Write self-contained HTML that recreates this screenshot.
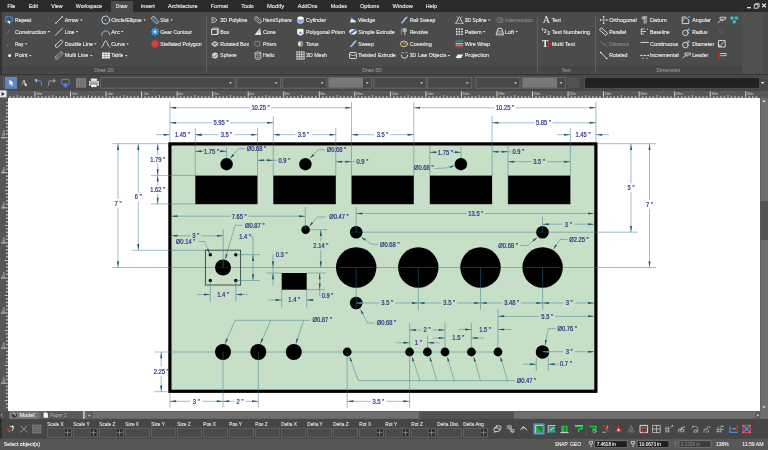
<!DOCTYPE html>
<html><head><meta charset="utf-8"><title>CAD</title>
<style>
html,body{margin:0;padding:0;background:#4a4a4a;overflow:hidden}
body{width:768px;height:450px;position:relative;font-family:"Liberation Sans",sans-serif}
#menubar{position:absolute;left:0;top:0;width:768px;height:12.2px;background:#2b2b2b}
#tab{position:absolute;left:111.3px;top:0.8px;width:22px;height:12px;background:#4b4b4b}
#ribbon{position:absolute;left:0;top:12.2px;width:768px;height:62.3px;background:#4b4b4b}
#ribbon .lbl{position:absolute;left:1.6px;top:53.6px;width:740px;height:7px;background:#454545}
#ribbon .edge{position:absolute;left:0;top:0;width:1.6px;height:62.3px;background:#333}
#ribbon .sep{position:absolute;top:3.5px;width:0.9px;height:57px;background:#606060}
#ribbon .right{position:absolute;left:741.6px;top:0;width:26.4px;height:62.3px;background:#505050}
#ribbon .right2{position:absolute;left:762.6px;top:0;width:5.4px;height:62.3px;background:#4a4a4a}
#rb-bottom{position:absolute;left:0;top:73.6px;width:768px;height:1.2px;background:#343434}
#toolbar{position:absolute;left:0;top:74.8px;width:768px;height:15.5px;background:#494949}
#canvas{position:absolute;left:7.8px;top:98px;width:752.2px;height:313.3px;background:#fff}
svg{filter:blur(0.35px);position:absolute;left:0;top:0;overflow:visible}
text{font-family:"Liberation Sans",sans-serif}
text.serif{font-family:"Liberation Serif",serif}
</style></head>
<body>
<div id="menubar"></div><div id="tab"></div>
<div id="ribbon"><div class="edge"></div><div class="lbl"></div>
<div class="sep" style="left:205.8px"></div><div class="sep" style="left:537.2px"></div><div class="sep" style="left:594.6px"></div>
<div class="right"></div><div class="right2"></div></div>
<div id="rb-bottom"></div>
<div id="toolbar"></div>
<div id="canvas"></div>
<svg id="ui" width="768" height="450" viewBox="0 0 768 450">
<g id="ribbon-text">
<text x="7.5" y="8.3" font-size="5.8" fill="#e6e6e6" textLength="7.8" lengthAdjust="spacingAndGlyphs" stroke="#e6e6e6" stroke-width="0.16">File</text>
<text x="28.7" y="8.3" font-size="5.8" fill="#e6e6e6" textLength="9.3" lengthAdjust="spacingAndGlyphs" stroke="#e6e6e6" stroke-width="0.16">Edit</text>
<text x="51.3" y="8.3" font-size="5.8" fill="#e6e6e6" textLength="11.2" lengthAdjust="spacingAndGlyphs" stroke="#e6e6e6" stroke-width="0.16">View</text>
<text x="75.8" y="8.3" font-size="5.8" fill="#e6e6e6" textLength="26.2" lengthAdjust="spacingAndGlyphs" stroke="#e6e6e6" stroke-width="0.16">Workspace</text>
<text x="115.8" y="8.3" font-size="5.8" fill="#e6e6e6" textLength="11.7" lengthAdjust="spacingAndGlyphs" stroke="#e6e6e6" stroke-width="0.16">Draw</text>
<text x="140.8" y="8.3" font-size="5.8" fill="#e6e6e6" textLength="13.9" lengthAdjust="spacingAndGlyphs" stroke="#e6e6e6" stroke-width="0.16">Insert</text>
<text x="168.0" y="8.3" font-size="5.8" fill="#e6e6e6" textLength="29.5" lengthAdjust="spacingAndGlyphs" stroke="#e6e6e6" stroke-width="0.16">Architecture</text>
<text x="210.8" y="8.3" font-size="5.8" fill="#e6e6e6" textLength="17.2" lengthAdjust="spacingAndGlyphs" stroke="#e6e6e6" stroke-width="0.16">Format</text>
<text x="241.3" y="8.3" font-size="5.8" fill="#e6e6e6" textLength="12.4" lengthAdjust="spacingAndGlyphs" stroke="#e6e6e6" stroke-width="0.16">Tools</text>
<text x="267.0" y="8.3" font-size="5.8" fill="#e6e6e6" textLength="17.2" lengthAdjust="spacingAndGlyphs" stroke="#e6e6e6" stroke-width="0.16">Modify</text>
<text x="297.8" y="8.3" font-size="5.8" fill="#e6e6e6" textLength="19.7" lengthAdjust="spacingAndGlyphs" stroke="#e6e6e6" stroke-width="0.16">AddOns</text>
<text x="330.8" y="8.3" font-size="5.8" fill="#e6e6e6" textLength="16.2" lengthAdjust="spacingAndGlyphs" stroke="#e6e6e6" stroke-width="0.16">Modes</text>
<text x="360.0" y="8.3" font-size="5.8" fill="#e6e6e6" textLength="19.2" lengthAdjust="spacingAndGlyphs" stroke="#e6e6e6" stroke-width="0.16">Options</text>
<text x="392.5" y="8.3" font-size="5.8" fill="#e6e6e6" textLength="20.3" lengthAdjust="spacingAndGlyphs" stroke="#e6e6e6" stroke-width="0.16">Window</text>
<text x="425.8" y="8.3" font-size="5.8" fill="#e6e6e6" textLength="11.2" lengthAdjust="spacingAndGlyphs" stroke="#e6e6e6" stroke-width="0.16">Help</text>
<rect x="747" y="7" width="4" height="1.3" fill="#ddd"/>
<rect x="754.3" y="4.6" width="3.6" height="3.6" fill="none" stroke="#ddd" stroke-width="0.9"/><path d="M755.6 4.4V3.4H759.2V7H758.2" fill="none" stroke="#ddd" stroke-width="0.8"/>
<path d="M762.2 3.6l3.8 3.8M766 3.6l-3.8 3.8" stroke="#eee" stroke-width="1.2"/>
<text x="15.0" y="21.9" font-size="5.7" fill="#e6e6e6" textLength="16.3" lengthAdjust="spacingAndGlyphs" stroke="#e6e6e6" stroke-width="0.16">Repeat</text>
<text x="15.0" y="33.6" font-size="5.7" fill="#e6e6e6" textLength="31.3" lengthAdjust="spacingAndGlyphs" stroke="#e6e6e6" stroke-width="0.16">Construction</text>
<path d="M47.5 31.1h2.6l-1.3 1.5z" fill="#e6e6e6"/>
<text x="15.0" y="45.7" font-size="5.7" fill="#e6e6e6" textLength="8.3" lengthAdjust="spacingAndGlyphs" stroke="#e6e6e6" stroke-width="0.16">Ray</text>
<path d="M24.7 43.2h2.6l-1.3 1.5z" fill="#e6e6e6"/>
<text x="15.0" y="57.4" font-size="5.7" fill="#e6e6e6" textLength="12.5" lengthAdjust="spacingAndGlyphs" stroke="#e6e6e6" stroke-width="0.16">Point</text>
<path d="M29.0 54.9h2.6l-1.3 1.5z" fill="#e6e6e6"/>
<text x="64.7" y="21.9" font-size="5.7" fill="#e6e6e6" textLength="13.6" lengthAdjust="spacingAndGlyphs" stroke="#e6e6e6" stroke-width="0.16">Arrow</text>
<path d="M80.0 19.4h2.6l-1.3 1.5z" fill="#e6e6e6"/>
<text x="64.7" y="33.6" font-size="5.7" fill="#e6e6e6" textLength="9.8" lengthAdjust="spacingAndGlyphs" stroke="#e6e6e6" stroke-width="0.16">Line</text>
<path d="M75.7 31.1h2.6l-1.3 1.5z" fill="#e6e6e6"/>
<text x="64.7" y="45.7" font-size="5.7" fill="#e6e6e6" textLength="28.3" lengthAdjust="spacingAndGlyphs" stroke="#e6e6e6" stroke-width="0.16">Double Line</text>
<path d="M94.0 43.2h2.6l-1.3 1.5z" fill="#e6e6e6"/>
<text x="64.7" y="57.4" font-size="5.7" fill="#e6e6e6" textLength="23.6" lengthAdjust="spacingAndGlyphs" stroke="#e6e6e6" stroke-width="0.16">Multi Line</text>
<path d="M90.0 54.9h2.6l-1.3 1.5z" fill="#e6e6e6"/>
<text x="111.3" y="21.9" font-size="5.7" fill="#e6e6e6" textLength="30.4" lengthAdjust="spacingAndGlyphs" stroke="#e6e6e6" stroke-width="0.16">Circle/Ellipse</text>
<path d="M143.4 19.4h2.6l-1.3 1.5z" fill="#e6e6e6"/>
<text x="111.3" y="33.6" font-size="5.7" fill="#e6e6e6" textLength="8.4" lengthAdjust="spacingAndGlyphs" stroke="#e6e6e6" stroke-width="0.16">Arc</text>
<path d="M120.9 31.1h2.6l-1.3 1.5z" fill="#e6e6e6"/>
<text x="111.3" y="45.7" font-size="5.7" fill="#e6e6e6" textLength="13.7" lengthAdjust="spacingAndGlyphs" stroke="#e6e6e6" stroke-width="0.16">Curve</text>
<path d="M126.3 43.2h2.6l-1.3 1.5z" fill="#e6e6e6"/>
<text x="111.3" y="57.4" font-size="5.7" fill="#e6e6e6" textLength="12.0" lengthAdjust="spacingAndGlyphs" stroke="#e6e6e6" stroke-width="0.16">Table</text>
<path d="M125.0 54.9h2.6l-1.3 1.5z" fill="#e6e6e6"/>
<text x="160.3" y="21.9" font-size="5.7" fill="#e6e6e6" textLength="8.4" lengthAdjust="spacingAndGlyphs" stroke="#e6e6e6" stroke-width="0.16">Slot</text>
<path d="M170.4 19.4h2.6l-1.3 1.5z" fill="#e6e6e6"/>
<text x="160.3" y="33.6" font-size="5.7" fill="#e6e6e6" textLength="31.7" lengthAdjust="spacingAndGlyphs" stroke="#e6e6e6" stroke-width="0.16">Gear Contour</text>
<text x="160.3" y="45.7" font-size="5.7" fill="#e6e6e6" textLength="41.4" lengthAdjust="spacingAndGlyphs" stroke="#e6e6e6" stroke-width="0.16">Stellated Polygon</text>
<text x="220.3" y="21.9" font-size="5.7" fill="#e6e6e6" textLength="27.2" lengthAdjust="spacingAndGlyphs" stroke="#e6e6e6" stroke-width="0.16">3D Polyline</text>
<text x="220.3" y="33.6" font-size="5.7" fill="#e6e6e6" textLength="9.0" lengthAdjust="spacingAndGlyphs" stroke="#e6e6e6" stroke-width="0.16">Box</text>
<text x="220.3" y="45.7" font-size="5.7" fill="#e6e6e6" textLength="28.7" lengthAdjust="spacingAndGlyphs" stroke="#e6e6e6" stroke-width="0.16">Rotated Box</text>
<text x="220.3" y="57.4" font-size="5.7" fill="#e6e6e6" textLength="16.4" lengthAdjust="spacingAndGlyphs" stroke="#e6e6e6" stroke-width="0.16">Sphere</text>
<text x="263.0" y="21.9" font-size="5.7" fill="#e6e6e6" textLength="29.0" lengthAdjust="spacingAndGlyphs" stroke="#e6e6e6" stroke-width="0.16">HemiSphere</text>
<text x="263.0" y="33.6" font-size="5.7" fill="#e6e6e6" textLength="12.8" lengthAdjust="spacingAndGlyphs" stroke="#e6e6e6" stroke-width="0.16">Cone</text>
<text x="263.0" y="45.7" font-size="5.7" fill="#e6e6e6" textLength="13.5" lengthAdjust="spacingAndGlyphs" stroke="#e6e6e6" stroke-width="0.16">Prism</text>
<text x="263.0" y="57.4" font-size="5.7" fill="#e6e6e6" textLength="11.5" lengthAdjust="spacingAndGlyphs" stroke="#e6e6e6" stroke-width="0.16">Helix</text>
<text x="306.0" y="21.9" font-size="5.7" fill="#e6e6e6" textLength="20.0" lengthAdjust="spacingAndGlyphs" stroke="#e6e6e6" stroke-width="0.16">Cylinder</text>
<text x="306.0" y="33.6" font-size="5.7" fill="#e6e6e6" textLength="39.0" lengthAdjust="spacingAndGlyphs" stroke="#e6e6e6" stroke-width="0.16">Polygonal Prism</text>
<text x="306.0" y="45.7" font-size="5.7" fill="#e6e6e6" textLength="12.7" lengthAdjust="spacingAndGlyphs" stroke="#e6e6e6" stroke-width="0.16">Torus</text>
<text x="306.0" y="57.4" font-size="5.7" fill="#e6e6e6" textLength="21.0" lengthAdjust="spacingAndGlyphs" stroke="#e6e6e6" stroke-width="0.16">3D Mesh</text>
<text x="358.3" y="21.9" font-size="5.7" fill="#e6e6e6" textLength="17.0" lengthAdjust="spacingAndGlyphs" stroke="#e6e6e6" stroke-width="0.16">Wedge</text>
<text x="358.3" y="33.6" font-size="5.7" fill="#e6e6e6" textLength="36.4" lengthAdjust="spacingAndGlyphs" stroke="#e6e6e6" stroke-width="0.16">Simple Extrude</text>
<text x="358.3" y="45.7" font-size="5.7" fill="#e6e6e6" textLength="15.4" lengthAdjust="spacingAndGlyphs" stroke="#e6e6e6" stroke-width="0.16">Sweep</text>
<text x="358.3" y="57.4" font-size="5.7" fill="#e6e6e6" textLength="37.5" lengthAdjust="spacingAndGlyphs" stroke="#e6e6e6" stroke-width="0.16">Twisted Extrude</text>
<text x="409.7" y="21.9" font-size="5.7" fill="#e6e6e6" textLength="25.6" lengthAdjust="spacingAndGlyphs" stroke="#e6e6e6" stroke-width="0.16">Rail Sweep</text>
<text x="409.7" y="33.6" font-size="5.7" fill="#e6e6e6" textLength="18.3" lengthAdjust="spacingAndGlyphs" stroke="#e6e6e6" stroke-width="0.16">Revolve</text>
<text x="409.7" y="45.7" font-size="5.7" fill="#e6e6e6" textLength="22.0" lengthAdjust="spacingAndGlyphs" stroke="#e6e6e6" stroke-width="0.16">Covering</text>
<text x="409.7" y="57.4" font-size="5.7" fill="#e6e6e6" textLength="36.6" lengthAdjust="spacingAndGlyphs" stroke="#e6e6e6" stroke-width="0.16">3D Law Objects</text>
<path d="M447.5 54.9h2.6l-1.3 1.5z" fill="#e6e6e6"/>
<text x="464.7" y="21.9" font-size="5.7" fill="#e6e6e6" textLength="22.0" lengthAdjust="spacingAndGlyphs" stroke="#e6e6e6" stroke-width="0.16">3D Spline</text>
<path d="M487.9 19.4h2.6l-1.3 1.5z" fill="#e6e6e6"/>
<text x="464.7" y="33.6" font-size="5.7" fill="#e6e6e6" textLength="17.0" lengthAdjust="spacingAndGlyphs" stroke="#e6e6e6" stroke-width="0.16">Pattern</text>
<path d="M482.9 31.1h2.6l-1.3 1.5z" fill="#e6e6e6"/>
<text x="464.7" y="45.7" font-size="5.7" fill="#e6e6e6" textLength="25.3" lengthAdjust="spacingAndGlyphs" stroke="#e6e6e6" stroke-width="0.16">Wire Wrap</text>
<text x="464.7" y="57.4" font-size="5.7" fill="#e6e6e6" textLength="24.3" lengthAdjust="spacingAndGlyphs" stroke="#e6e6e6" stroke-width="0.16">Projection</text>
<text x="505.0" y="21.9" font-size="5.7" fill="#858585" textLength="28.3" lengthAdjust="spacingAndGlyphs" stroke="#858585" stroke-width="0.16">Intersection</text>
<text x="505.0" y="33.6" font-size="5.7" fill="#e6e6e6" textLength="9.0" lengthAdjust="spacingAndGlyphs" stroke="#e6e6e6" stroke-width="0.16">Loft</text>
<path d="M515.4 31.1h2.6l-1.3 1.5z" fill="#e6e6e6"/>
<text x="551.7" y="21.9" font-size="5.7" fill="#e6e6e6" textLength="9.1" lengthAdjust="spacingAndGlyphs" stroke="#e6e6e6" stroke-width="0.16">Text</text>
<text x="551.7" y="33.6" font-size="5.7" fill="#e6e6e6" textLength="38.3" lengthAdjust="spacingAndGlyphs" stroke="#e6e6e6" stroke-width="0.16">Text Numbering</text>
<text x="551.7" y="45.7" font-size="5.7" fill="#e6e6e6" textLength="23.3" lengthAdjust="spacingAndGlyphs" stroke="#e6e6e6" stroke-width="0.16">Multi Text</text>
<text x="609.2" y="21.9" font-size="5.7" fill="#e6e6e6" textLength="27.5" lengthAdjust="spacingAndGlyphs" stroke="#e6e6e6" stroke-width="0.16">Orthogonal</text>
<text x="609.2" y="33.6" font-size="5.7" fill="#e6e6e6" textLength="17.0" lengthAdjust="spacingAndGlyphs" stroke="#e6e6e6" stroke-width="0.16">Parallel</text>
<text x="609.2" y="45.7" font-size="5.7" fill="#858585" textLength="19.8" lengthAdjust="spacingAndGlyphs" stroke="#858585" stroke-width="0.16">Distance</text>
<text x="609.2" y="57.4" font-size="5.7" fill="#e6e6e6" textLength="18.3" lengthAdjust="spacingAndGlyphs" stroke="#e6e6e6" stroke-width="0.16">Rotated</text>
<text x="650.0" y="21.9" font-size="5.7" fill="#e6e6e6" textLength="16.7" lengthAdjust="spacingAndGlyphs" stroke="#e6e6e6" stroke-width="0.16">Datum</text>
<text x="650.0" y="33.6" font-size="5.7" fill="#e6e6e6" textLength="19.7" lengthAdjust="spacingAndGlyphs" stroke="#e6e6e6" stroke-width="0.16">Baseline</text>
<text x="650.0" y="45.7" font-size="5.7" fill="#e6e6e6" textLength="28.3" lengthAdjust="spacingAndGlyphs" stroke="#e6e6e6" stroke-width="0.16">Continuous</text>
<text x="650.0" y="57.4" font-size="5.7" fill="#e6e6e6" textLength="28.7" lengthAdjust="spacingAndGlyphs" stroke="#e6e6e6" stroke-width="0.16">Incremental</text>
<text x="692.2" y="21.9" font-size="5.7" fill="#e6e6e6" textLength="18.6" lengthAdjust="spacingAndGlyphs" stroke="#e6e6e6" stroke-width="0.16">Angular</text>
<text x="692.2" y="33.6" font-size="5.7" fill="#e6e6e6" textLength="15.3" lengthAdjust="spacingAndGlyphs" stroke="#e6e6e6" stroke-width="0.16">Radius</text>
<text x="692.2" y="45.7" font-size="5.7" fill="#e6e6e6" textLength="22.0" lengthAdjust="spacingAndGlyphs" stroke="#e6e6e6" stroke-width="0.16">Diameter</text>
<text x="692.2" y="57.4" font-size="5.7" fill="#e6e6e6" textLength="16.1" lengthAdjust="spacingAndGlyphs" stroke="#e6e6e6" stroke-width="0.16">Leader</text>
<text x="104.0" y="71.5" font-size="5.3" fill="#8e8e8e" textLength="19.6" lengthAdjust="spacingAndGlyphs" stroke="#8e8e8e" stroke-width="0.16" text-anchor="middle">Draw 2D</text>
<text x="372.0" y="71.5" font-size="5.3" fill="#8e8e8e" textLength="19.6" lengthAdjust="spacingAndGlyphs" stroke="#8e8e8e" stroke-width="0.16" text-anchor="middle">Draw 3D</text>
<text x="566.0" y="71.5" font-size="5.3" fill="#8e8e8e" textLength="9.2" lengthAdjust="spacingAndGlyphs" stroke="#8e8e8e" stroke-width="0.16" text-anchor="middle">Text</text>
<text x="668.3" y="71.5" font-size="5.3" fill="#8e8e8e" textLength="23.8" lengthAdjust="spacingAndGlyphs" stroke="#8e8e8e" stroke-width="0.16" text-anchor="middle">Dimension</text>
</g>
<g id="ribbon-icons">
<g transform="translate(9.0 20.0)" fill="none" stroke-linecap="round" stroke-linejoin="round"><rect x="-3.6" y="-3.2" width="7.2" height="5" rx="1.6" fill="#41587c" stroke="#5f8fd0" stroke-width="0.9"/><path d="M-1.2 0.5l0 3 1-.9 .7 1.4 .7-.4-.7-1.3 1.3-.1z" fill="#fff"/></g>
<g transform="translate(8.5 31.7)" fill="none" stroke-linecap="round" stroke-linejoin="round"><path d="M-2 2.2l0.8-0.9M0.4-.4l0.8-.9" stroke="#6d8fc4" stroke-width="0.9"/></g>
<g transform="translate(8.5 43.8)" fill="none" stroke-linecap="round" stroke-linejoin="round"><path d="M-1.8 2.4l1.2-1.6" stroke="#6d8fc4" stroke-width="0.9"/></g>
<g transform="translate(9.6 55.5)" fill="none" stroke-linecap="round" stroke-linejoin="round"><circle r="1.5" fill="#fff"/></g>
<g transform="translate(59.0 20.0)" fill="none" stroke-linecap="round" stroke-linejoin="round"><path d="M-3 3L3-3" stroke="#e4e4e4" stroke-width="0.9"/><circle cx="-3.2" cy="3.2" r="0.9" fill="#aaa"/><circle cx="3.2" cy="-3.2" r="0.9" fill="#ccc"/></g>
<g transform="translate(59.0 31.7)" fill="none" stroke-linecap="round" stroke-linejoin="round"><path d="M-3.6 3.6L3.6-3.6" stroke="#e4e4e4" stroke-width="0.9"/></g>
<g transform="translate(59.0 43.8)" fill="none" stroke-linecap="round" stroke-linejoin="round"><rect x="-4.6" y="-1.5" width="9.2" height="3" rx="1.5" transform="rotate(-45)" stroke="#e4e4e4" stroke-width="0.8"/></g>
<g transform="translate(59.0 55.5)" fill="none" stroke-linecap="round" stroke-linejoin="round"><rect x="-4.6" y="-1.6" width="9.2" height="3.2" rx="1.6" transform="rotate(-45)" stroke="#bdbdbd" stroke-width="0.7"/><path d="M-3 3L3-3" stroke="#bdbdbd" stroke-width="0.6"/></g>
<g transform="translate(105.7 20.0)" fill="none" stroke-linecap="round" stroke-linejoin="round"><circle r="4" stroke="#cfe0f4" stroke-width="0.9"/><circle r="0.9" fill="#5a9be0"/></g>
<g transform="translate(105.7 32.3)" fill="none" stroke-linecap="round" stroke-linejoin="round"><path d="M-4 2.6A4 4 0 1 1 4 2.6" stroke="#b9cdea" stroke-width="0.9"/><circle cx="-1.6" cy="-1" r="0.6" fill="#5a9be0"/><circle cx="-4" cy="2.6" r="0.7" fill="#5a9be0"/></g>
<g transform="translate(105.7 44.1)" fill="none" stroke-linecap="round" stroke-linejoin="round"><path d="M-4.3 3C-2 3-1.6-3.4 0-3.4S2 3 4.3 3" stroke="#e4e4e4" stroke-width="0.9"/></g>
<g transform="translate(106.0 55.5)" fill="none" stroke-linecap="round" stroke-linejoin="round"><rect x="-4" y="-3" width="8" height="6" fill="#f2f2f2"/><path d="M-4-1h8M-4 1h8M-1.4-3v6M1.4-3v6" stroke="#777" stroke-width="0.5"/></g>
<g transform="translate(155.0 20.0)" fill="none" stroke-linecap="round" stroke-linejoin="round"><rect x="-4.2" y="-1.8" width="8.4" height="3.6" rx="1.8" transform="rotate(45)" stroke="#c8c8c8" stroke-width="0.8"/><rect x="-2.6" y="-0.7" width="5.2" height="1.4" rx="0.7" transform="rotate(45)" stroke="#8fa6c8" stroke-width="0.5"/></g>
<g transform="translate(155.0 31.7)" fill="none" stroke-linecap="round" stroke-linejoin="round"><g fill="#2f9ff0"><rect x="-0.8" y="-4" width="1.6" height="8" transform="rotate(0)"/><rect x="-0.8" y="-4" width="1.6" height="8" transform="rotate(45)"/><rect x="-0.8" y="-4" width="1.6" height="8" transform="rotate(90)"/><rect x="-0.8" y="-4" width="1.6" height="8" transform="rotate(135)"/><circle r="2.9"/></g><circle r="1.2" fill="#e8f4ff"/></g>
<g transform="translate(155.0 43.8)" fill="none" stroke-linecap="round" stroke-linejoin="round"><g fill="#e23a34"><rect x="-0.6" y="-4" width="1.2" height="8" transform="rotate(0)"/><rect x="-0.6" y="-4" width="1.2" height="8" transform="rotate(30)"/><rect x="-0.6" y="-4" width="1.2" height="8" transform="rotate(60)"/><rect x="-0.6" y="-4" width="1.2" height="8" transform="rotate(90)"/><rect x="-0.6" y="-4" width="1.2" height="8" transform="rotate(120)"/><rect x="-0.6" y="-4" width="1.2" height="8" transform="rotate(150)"/><circle r="3"/></g></g>
<g transform="translate(215.0 20.0)" fill="none" stroke-linecap="round" stroke-linejoin="round"><path d="M-3.5-2h3l2.5 2-2.5 2.3h-3M-3.5 0h2.6" stroke="#e4e4e4" stroke-width="0.8"/></g>
<g transform="translate(215.0 31.7)" fill="none" stroke-linecap="round" stroke-linejoin="round"><rect x="-3" y="-2.4" width="5.4" height="5.2" stroke="#e4e4e4" stroke-width="1"/><path d="M-3-2.4l1-1.2h5.6v5.4l-1.2 1" stroke="#e4e4e4" stroke-width="0.7"/></g>
<g transform="translate(215.0 43.8)" fill="none" stroke-linecap="round" stroke-linejoin="round"><path d="M-3-0.6l3-1.8 3 1.8-3 1.8zM-3-0.6v1.6l3 2 3-2v-1.6" fill="#bbb" stroke="#ddd" stroke-width="0.5"/></g>
<g transform="translate(215.0 55.5)" fill="none" stroke-linecap="round" stroke-linejoin="round"><circle r="3" fill="#d0d0d0"/><path d="M-1.5 0.8a2 2 0 0 0 3-1.6" stroke="#555" stroke-width="0.7"/></g>
<g transform="translate(258.0 20.0)" fill="none" stroke-linecap="round" stroke-linejoin="round"><rect x="-4" y="-1.7" width="8" height="3.4" rx="1.7" transform="rotate(40)" stroke="#c8c8c8" stroke-width="0.8"/><path d="M-1.5-1.5l3 3" stroke="#c8c8c8" stroke-width="0.6"/></g>
<g transform="translate(258.0 31.7)" fill="none" stroke-linecap="round" stroke-linejoin="round"><path d="M2-3.6L3.2 3.2H-3.4z" fill="#e8e8e8"/><path d="M2-3.6L0.6 3.2" stroke="#999" stroke-width="0.5"/></g>
<g transform="translate(257.5 43.8)" fill="none" stroke-linecap="round" stroke-linejoin="round"><path d="M-2-2.4h4l0.6 3.6-2.6 1.4-2.6-1.4z" stroke="#7d98c8" stroke-width="0.8"/></g>
<g transform="translate(258.0 55.5)" fill="none" stroke-linecap="round" stroke-linejoin="round"><path d="M-2.8-2.6v5.4a2.8 1 0 0 0 5.6 0v-5.4" stroke="#ddd" stroke-width="0.8"/><ellipse cy="-2.6" rx="2.8" ry="1" stroke="#ddd" stroke-width="0.7"/><path d="M-2.8-0.6a2.8 1 0 0 0 5.6 0M-2.8 1.2a2.8 1 0 0 0 5.6 0M0-1.6v5.4" stroke="#aaa" stroke-width="0.5"/></g>
<g transform="translate(300.5 20.0)" fill="none" stroke-linecap="round" stroke-linejoin="round"><path d="M-2.6-2v4a2.6 1.2 0 0 0 5.2 0v-4" fill="#6f9fe0" stroke="#fff" stroke-width="0.8"/><ellipse cy="-2" rx="2.6" ry="1.2" fill="#fff" stroke="#fff" stroke-width="0.8"/></g>
<g transform="translate(300.5 31.7)" fill="none" stroke-linecap="round" stroke-linejoin="round"><path d="M-2.6-2.4h5.2v4.6l-2.6 1.4-2.6-1.4z" fill="#e8eef8" stroke="#fff" stroke-width="0.8"/><path d="M-1 0.2h2v2h-2z" fill="#5585d0"/></g>
<g transform="translate(300.5 43.8)" fill="none" stroke-linecap="round" stroke-linejoin="round"><circle r="2.6" fill="#e2e2e2"/><path d="M0-2.6a2.6 2.6 0 0 1 0 5.2z" fill="#8a8a8a"/></g>
<g transform="translate(300.5 55.5)" fill="none" stroke-linecap="round" stroke-linejoin="round"><path d="M-3.6-3.6v7.2M-1.2-3.6v7.2M1.2-3.6v7.2M3.6-3.6v7.2M-3.6-3.6h7.2M-3.6-1.2h7.2M-3.6 1.2h7.2M-3.6 3.6h7.2" stroke="#e0e0e0" stroke-width="0.8"/></g>
<g transform="translate(353.0 20.0)" fill="none" stroke-linecap="round" stroke-linejoin="round"><path d="M-3 2.6l1.4-4.6 4.8 3.2-1.2 1.4z" fill="#e8e8e8"/><path d="M-1.6-2l4.8 3.2" stroke="#5c8ed8" stroke-width="0.9"/></g>
<g transform="translate(353.0 31.7)" fill="none" stroke-linecap="round" stroke-linejoin="round"><ellipse rx="3.8" ry="2.8" fill="#e6ecf6"/><path d="M-3.4 1.2L1.6-2.4l1.8 1.2L-1.6 2.6z" fill="#3f77d0"/></g>
<g transform="translate(353.0 43.8)" fill="none" stroke-linecap="round" stroke-linejoin="round"><path d="M-3 3L2-3h1.6L-1.4 3z" fill="#e8eef8" stroke="#6a96dc" stroke-width="0.6"/></g>
<g transform="translate(353.0 55.5)" fill="none" stroke-linecap="round" stroke-linejoin="round"><rect x="-3.4" y="-3" width="6.8" height="6" rx="0.8" stroke="#e4e4e4" stroke-width="0.9"/><path d="M-3.4-0.8q3.4 2 6.8 0" stroke="#e4e4e4" stroke-width="0.7"/></g>
<g transform="translate(404.0 20.0)" fill="none" stroke-linecap="round" stroke-linejoin="round"><path d="M-3 3L2-3h1.6L-1.4 3z" fill="#e8eef8" stroke="#6a96dc" stroke-width="0.6"/></g>
<g transform="translate(404.0 31.7)" fill="none" stroke-linecap="round" stroke-linejoin="round"><path d="M0.8-3.2v6.4M-0.6-2.8h2.8v2.4h-2.8z" stroke="#e6e6e6" stroke-width="0.8"/><path d="M-2.6-2.6v5" stroke="#e8a060" stroke-width="0.8" stroke-dasharray="1 1"/></g>
<g transform="translate(404.0 43.8)" fill="none" stroke-linecap="round" stroke-linejoin="round"><ellipse rx="3.6" ry="2.8" stroke="#e8d84a" stroke-width="1"/><ellipse cx="0.4" cy="-0.8" rx="2.2" ry="1.6" fill="#7a68d8"/></g>
<g transform="translate(404.5 55.5)" fill="none" stroke-linecap="round" stroke-linejoin="round"><path d="M-3.2-0.4a3.2 3.2 0 0 0 6.4 0" stroke="#e4e4e4" stroke-width="0.9"/><path d="M-2.6-2.8h1.4M1.2-2.8h1.4" stroke="#e4e4e4" stroke-width="0.7"/></g>
<g transform="translate(459.4 20.0)" fill="none" stroke-linecap="round" stroke-linejoin="round"><path d="M-3.6 3.2C-2 3-1.4-3 0-3S2 3 3.6 3.2" stroke="#e4e4e4" stroke-width="0.9"/><path d="M-3.8 3.4h7.6" stroke="#e4e4e4" stroke-width="0.6"/><circle cx="-2.4" cy="-3" r="0.7" fill="#5a9be0"/><circle cx="2.4" cy="-3" r="0.7" fill="#5a9be0"/><circle cy="0.6" r="0.7" fill="#5a9be0"/></g>
<g transform="translate(459.4 31.7)" fill="none" stroke-linecap="round" stroke-linejoin="round"><g fill="#e4e4e4"><rect x="-3.4000000000000004" y="-3.4000000000000004" width="1.6" height="1.6"/><rect x="-3.4000000000000004" y="-0.8" width="1.6" height="1.6"/><rect x="-3.4000000000000004" y="1.8" width="1.6" height="1.6"/><rect x="-0.8" y="-3.4000000000000004" width="1.6" height="1.6"/><rect x="-0.8" y="-0.8" width="1.6" height="1.6"/><rect x="-0.8" y="1.8" width="1.6" height="1.6"/><rect x="1.8" y="-3.4000000000000004" width="1.6" height="1.6"/><rect x="1.8" y="-0.8" width="1.6" height="1.6"/><rect x="1.8" y="1.8" width="1.6" height="1.6"/></g></g>
<g transform="translate(459.4 43.8)" fill="none" stroke-linecap="round" stroke-linejoin="round"><path d="M-3.4-2.6h6.8" stroke="#2e9a8a" stroke-width="1.2"/><path d="M-3.4-0.4h6.8M-3.4 1.2h6.8" stroke="#e0e0e0" stroke-width="0.8"/><path d="M-3.4 3h6.8" stroke="#d05050" stroke-width="1"/></g>
<g transform="translate(459.4 55.5)" fill="none" stroke-linecap="round" stroke-linejoin="round"><path d="M-3.8 2.4l2-3.4h5.6l-2 3.4z" fill="#eee"/><path d="M-2 3.4h2.6" stroke="#d04040" stroke-width="1"/></g>
<g transform="translate(500.0 20.0)" fill="none" stroke-linecap="round" stroke-linejoin="round"><circle cx="-0.6" cy="0" r="2.8" stroke="#7a7a7a" stroke-width="0.8"/><path d="M-0.4-1h3.4v3.4h-3.4z" stroke="#7a7a7a" stroke-width="0.8"/></g>
<g transform="translate(500.0 31.7)" fill="none" stroke-linecap="round" stroke-linejoin="round"><path d="M-1.6-3.4h3.2l2 6.6h-7.2z" stroke="#e4e4e4" stroke-width="0.9"/><path d="M-2.6-0.6h5.2M-3 1.4h6" stroke="#e4e4e4" stroke-width="0.6"/></g>
<text x="546.3" y="23.2" class="serif" font-size="10" fill="#f0f0f0" text-anchor="middle">A</text>
<text x="541.6" y="31.3" font-size="4.2" fill="#f0f0f0" font-weight="bold">1</text><text x="544" y="33.3" font-size="4.6" fill="#f0f0f0" font-weight="bold">2</text><text x="547.2" y="35.1" font-size="4.6" fill="#f0f0f0" font-weight="bold">3</text>
<text x="545.2" y="47.0" class="serif" font-size="9.6" font-weight="bold" fill="#f4f4f4" text-anchor="middle">T</text><rect x="548" y="41.6" width="1.3" height="5.6" fill="#c82828"/>
<g transform="translate(603.7 20.0)" fill="none" stroke-linecap="round" stroke-linejoin="round"><path d="M-3 0h6M0-3v6" stroke="#ddd" stroke-width="0.6" stroke-dasharray="0.8 0.8"/><g fill="#f0f0f0"><circle cx="-3.2" r="0.8"/><circle cx="3.2" r="0.8"/><circle cy="-3.2" r="0.8"/><circle cy="3.2" r="0.8"/></g></g>
<g transform="translate(603.7 31.7)" fill="none" stroke-linecap="round" stroke-linejoin="round"><rect x="-4" y="-1.4" width="8" height="2.8" transform="rotate(42)" stroke="#e4e4e4" stroke-width="0.9"/></g>
<g transform="translate(603.7 43.8)" fill="none" stroke-linecap="round" stroke-linejoin="round"><path d="M-3-2.4L-1 0.4h2.2L3 3" stroke="#7c7c7c" stroke-width="0.9"/></g>
<g transform="translate(603.7 55.5)" fill="none" stroke-linecap="round" stroke-linejoin="round"><path d="M-2.8-2.8L2.8 2.8" stroke="#e4e4e4" stroke-width="0.9"/><circle cx="-3" cy="-3" r="0.8" fill="#fff"/><circle cx="3" cy="3" r="0.8" fill="#fff"/></g>
<g transform="translate(644.7 20.0)" fill="none" stroke-linecap="round" stroke-linejoin="round"><path d="M-2.6-3h4.4M-2.6-1.4h2M1.4-3v6.2M-0.4-3v6.2" stroke="#e4e4e4" stroke-width="0.8"/></g>
<g transform="translate(644.7 31.7)" fill="none" stroke-linecap="round" stroke-linejoin="round"><path d="M-3.4-2.6v5M-3.4-2.6h3M-3.4-0.2h4.4M-3.4 2.2h2.2" stroke="#e4e4e4" stroke-width="0.8"/><circle cx="2.6" cy="-2.6" r="0.7" fill="#ddd"/></g>
<g transform="translate(644.7 42.4)" fill="none" stroke-linecap="round" stroke-linejoin="round"><path d="M-3.8 0h7.6" stroke="#e4e4e4" stroke-width="0.9"/></g>
<g transform="translate(644.7 55.5)" fill="none" stroke-linecap="round" stroke-linejoin="round"><path d="M-3.8 0h7.6" stroke="#ccc" stroke-width="0.5"/><g fill="#f0f0f0"><circle cx="-3.6" r="0.8"/><circle cx="0" r="0.8"/><circle cx="3.6" r="0.8"/><circle cx="-1.6" cy="2.8" r="0.6"/><circle cx="2.2" cy="2.8" r="0.6"/></g></g>
<g transform="translate(686.0 20.0)" fill="none" stroke-linecap="round" stroke-linejoin="round"><path d="M-3.4-3h3.2l3 3v3.6h-6.2z" stroke="#e4e4e4" stroke-width="0.9"/><path d="M-3.4 1.2a3 3 0 0 1 3-3" stroke="#e4e4e4" stroke-width="0.6"/><circle cx="3" cy="-3" r="1" fill="#5a9be0"/></g>
<g transform="translate(686.0 32.3)" fill="none" stroke-linecap="round" stroke-linejoin="round"><circle cx="-0.6" cy="0.6" r="2.8" stroke="#e4e4e4" stroke-width="0.9"/><circle cx="-0.6" cy="0.6" r="0.8" fill="#d03030"/><circle cx="2.6" cy="-2.8" r="1.3" fill="#5a9be0"/><path d="M1.2-1.2l1-1" stroke="#ddd" stroke-width="0.6"/></g>
<g transform="translate(686.0 44.4)" fill="none" stroke-linecap="round" stroke-linejoin="round"><circle cx="-0.6" cy="0.6" r="2.8" stroke="#e4e4e4" stroke-width="0.9"/><circle cx="-0.6" cy="0.6" r="0.8" fill="#d03030"/><circle cx="2.6" cy="-2.8" r="1.3" fill="#5a9be0"/><path d="M1.2-1.2l1-1" stroke="#ddd" stroke-width="0.6"/></g>
<g transform="translate(686.4 55.5)" fill="none" stroke-linecap="round" stroke-linejoin="round"><path d="M-3.6 2.6l2-2.2h2.6M-1-2.6h5v2h-5z" stroke="#e4e4e4" stroke-width="0.8"/></g>
<g transform="translate(722.0 20.0)" fill="none" stroke-linecap="round" stroke-linejoin="round"><path d="M-3.8 2.8l2-2.2h3M-1.6-2.8h5.4v2h-5.4z" stroke="#e4e4e4" stroke-width="0.8"/></g>
<g transform="translate(721.6 31.7)" fill="none" stroke-linecap="round" stroke-linejoin="round"><circle cx="-0.4" cy="-0.4" r="1.8" stroke="#686868" stroke-width="0.7"/><path d="M1 1l1.4 1.4" stroke="#686868" stroke-width="0.7"/></g>
<g transform="translate(722.0 43.8)" fill="none" stroke-linecap="round" stroke-linejoin="round"><rect x="-3.2" y="-3.2" width="6.4" height="6.4" stroke="#e4e4e4" stroke-width="0.9"/><path d="M-2.6 2.6L2 -2" stroke="#e4e4e4" stroke-width="0.7"/><path d="M-2.8 0.6v2.2h2.2" stroke="#e4e4e4" stroke-width="0.6"/></g>
<g transform="translate(722.0 55.5)" fill="none" stroke-linecap="round" stroke-linejoin="round"><path d="M-1.4-2h5.4v2.2h-5.4" stroke="#e4e4e4" stroke-width="0.8"/><path d="M-3.2-2.6v5.4" stroke="#e03030" stroke-width="1.2" stroke-dasharray="1.2 0.9"/></g>
<g transform="translate(734.2 20.0)" fill="none" stroke-linecap="round" stroke-linejoin="round"><g fill="#2fc0d8"><rect x="-3.8" y="-3.6" width="3.2" height="3.2" rx="0.8"/><rect x="0.6" y="-3.6" width="3.2" height="3.2" rx="0.8"/><rect x="-1.6" y="0.2" width="3.2" height="3.2" rx="0.8"/></g></g>
</g>
<g id="toolbar-items">
<rect x="5" y="76.8" width="12" height="12" fill="#5f86c0"/>
<g transform="translate(11.0 82.8)" fill="none" stroke-linecap="round" stroke-linejoin="round"><path d="M-1.6-3.4l0 5.6 1.4-1.2 1 2.2 1-.5-1-2.1 1.8-.2z" fill="#fff"/></g>
<g transform="translate(24.5 82.8)" fill="none" stroke-linecap="round" stroke-linejoin="round"><path d="M-2.4 1.2l2-4 0.8 0.6-0.4 2.6" stroke="#ddd" stroke-width="0.8"/><path d="M0.2-0.2l0 3.4 .8-.7 .6 1.3 .7-.3-.6-1.3 1.1-.1z" fill="#fff"/></g>
<g transform="translate(38.0 82.8)" fill="none" stroke-linecap="round" stroke-linejoin="round"><path d="M3.4 2.4v-2.6a1.8 1.8 0 0 0-1.8-1.8h-3" stroke="#4f7fcf" stroke-width="1.2"/><path d="M-4-2l3-2.2v4.4z" fill="#4f7fcf"/><path d="M-3.6-3.4h2.6v2.4z" fill="#e8e8e8"/></g>
<g transform="translate(52.0 82.8)" fill="none" stroke-linecap="round" stroke-linejoin="round"><path d="M-3.4 2.4v-2.6a1.8 1.8 0 0 1 1.8-1.8h3" stroke="#8a8a8a" stroke-width="1.2"/><path d="M4-2l-3-2.2v4.4z" fill="#9a9a9a"/></g>
<g transform="translate(65.5 82.8)" fill="none" stroke-linecap="round" stroke-linejoin="round"><rect x="-3.8" y="-3.4" width="7.6" height="5.2" rx="1.7" stroke="#4f7fcf" stroke-width="1.1"/><path d="M-0.8 0v3.4h-1.2l2 1.6 2-1.6h-1.2v-3.4z" fill="#5a8ad8"/></g>
<rect x="76" y="78" width="10" height="9.6" fill="#7e7e7e"/><path d="M78.5 78v9.6M81 78v9.6M83.5 78v9.6" stroke="#5c5c5c" stroke-width="0.6"/>
<g transform="translate(94.0 82.8)" fill="none" stroke-linecap="round" stroke-linejoin="round"><g transform="scale(1.25)"><rect x="-4" y="-1.4" width="8" height="3.8" rx="0.6" fill="#f0f0f0"/><rect x="-2.6" y="-3.6" width="5.2" height="2.4" fill="#f0f0f0" stroke="#444" stroke-width="0.4"/><rect x="-2.4" y="1" width="4.8" height="2.6" fill="#fff" stroke="#333" stroke-width="0.5"/><path d="M-4 0.2h8" stroke="#333" stroke-width="0.5"/></g></g>
<rect x="3" y="77" width="0.7" height="11" fill="#6a6a6a"/>
<rect x="100.7" y="77.4" width="134.3" height="10.8" fill="#484848" stroke="#6c6c6c" stroke-width="0.9"/>
<path d="M229.0 82.2h3l-1.5 1.7z" fill="#d0d0d0"/>
<rect x="236.7" y="77.4" width="44.0" height="10.8" fill="#484848" stroke="#6c6c6c" stroke-width="0.9"/>
<path d="M274.7 82.2h3l-1.5 1.7z" fill="#d0d0d0"/>
<rect x="282.7" y="77.4" width="44.0" height="10.8" fill="#484848" stroke="#6c6c6c" stroke-width="0.9"/>
<path d="M320.7 82.2h3l-1.5 1.7z" fill="#d0d0d0"/>
<rect x="328.3" y="77.4" width="43.4" height="10.8" fill="#484848" stroke="#6c6c6c" stroke-width="0.9"/>
<rect x="328.90000000000003" y="78" width="34.1" height="9.6" fill="#787878"/>
<path d="M365.7 82.2h3l-1.5 1.7z" fill="#d0d0d0"/>
<rect x="374" y="77.4" width="52.0" height="10.8" fill="#484848" stroke="#6c6c6c" stroke-width="0.9"/>
<path d="M420.0 82.2h3l-1.5 1.7z" fill="#d0d0d0"/>
<rect x="427.7" y="77.4" width="44.0" height="10.8" fill="#484848" stroke="#6c6c6c" stroke-width="0.9"/>
<path d="M465.7 82.2h3l-1.5 1.7z" fill="#d0d0d0"/>
<rect x="476" y="77.4" width="44.0" height="10.8" fill="#484848" stroke="#6c6c6c" stroke-width="0.9"/>
<path d="M514.0 82.2h3l-1.5 1.7z" fill="#d0d0d0"/>
<rect x="522.2" y="77.4" width="43.4" height="10.8" fill="#484848" stroke="#6c6c6c" stroke-width="0.9"/>
<rect x="522.8000000000001" y="78" width="34.2" height="9.6" fill="#787878"/>
<path d="M559.6 82.2h3l-1.5 1.7z" fill="#d0d0d0"/>
<rect x="567.2" y="77.4" width="11.6" height="10.8" fill="#525252"/>
<path d="M582 77v11.6" stroke="#3a3a3a" stroke-width="0.8"/>
<rect x="584.8" y="77.4" width="174.6" height="10.8" fill="#222" stroke="#5a5a5a" stroke-width="0.6"/>
<path d="M760.8 82h3.6l-1.8 2z" fill="#e8e8e8"/>
</g>
<g id="rulers">
<rect x="0" y="89.8" width="768" height="0.8" fill="#3c3c3c"/>
<rect x="0" y="90.6" width="768" height="7.4" fill="#585858"/>
<rect x="0" y="98" width="7.8" height="313.3" fill="#565656"/>
<rect x="9.22" y="96.3" width="1.6" height="1.7" fill="#c4c4c4"/>
<rect x="12.78" y="96.3" width="1.6" height="1.7" fill="#c4c4c4"/>
<rect x="16.73" y="95.2" width="0.9" height="2.8" fill="#d8d8d8"/>
<rect x="19.88" y="96.3" width="1.6" height="1.7" fill="#c4c4c4"/>
<rect x="23.44" y="96.3" width="1.6" height="1.7" fill="#c4c4c4"/>
<rect x="26.99" y="96.3" width="1.6" height="1.7" fill="#c4c4c4"/>
<rect x="30.55" y="96.3" width="1.6" height="1.7" fill="#c4c4c4"/>
<rect x="34.50" y="91.4" width="0.9" height="6.6" fill="#e0e0e0"/>
<rect x="37.65" y="96.3" width="1.6" height="1.7" fill="#c4c4c4"/>
<rect x="41.21" y="96.3" width="1.6" height="1.7" fill="#c4c4c4"/>
<rect x="44.76" y="96.3" width="1.6" height="1.7" fill="#c4c4c4"/>
<rect x="48.32" y="96.3" width="1.6" height="1.7" fill="#c4c4c4"/>
<rect x="52.27" y="95.2" width="0.9" height="2.8" fill="#d8d8d8"/>
<rect x="55.42" y="96.3" width="1.6" height="1.7" fill="#c4c4c4"/>
<rect x="58.98" y="96.3" width="1.6" height="1.7" fill="#c4c4c4"/>
<rect x="62.53" y="96.3" width="1.6" height="1.7" fill="#c4c4c4"/>
<rect x="66.09" y="96.3" width="1.6" height="1.7" fill="#c4c4c4"/>
<rect x="70.04" y="91.4" width="0.9" height="6.6" fill="#e0e0e0"/>
<rect x="73.19" y="96.3" width="1.6" height="1.7" fill="#c4c4c4"/>
<rect x="76.75" y="96.3" width="1.6" height="1.7" fill="#c4c4c4"/>
<rect x="80.30" y="96.3" width="1.6" height="1.7" fill="#c4c4c4"/>
<rect x="83.86" y="96.3" width="1.6" height="1.7" fill="#c4c4c4"/>
<rect x="87.81" y="95.2" width="0.9" height="2.8" fill="#d8d8d8"/>
<rect x="90.96" y="96.3" width="1.6" height="1.7" fill="#c4c4c4"/>
<rect x="94.52" y="96.3" width="1.6" height="1.7" fill="#c4c4c4"/>
<rect x="98.07" y="96.3" width="1.6" height="1.7" fill="#c4c4c4"/>
<rect x="101.63" y="96.3" width="1.6" height="1.7" fill="#c4c4c4"/>
<rect x="105.58" y="91.4" width="0.9" height="6.6" fill="#e0e0e0"/>
<rect x="108.73" y="96.3" width="1.6" height="1.7" fill="#c4c4c4"/>
<rect x="112.29" y="96.3" width="1.6" height="1.7" fill="#c4c4c4"/>
<rect x="115.84" y="96.3" width="1.6" height="1.7" fill="#c4c4c4"/>
<rect x="119.40" y="96.3" width="1.6" height="1.7" fill="#c4c4c4"/>
<rect x="123.35" y="95.2" width="0.9" height="2.8" fill="#d8d8d8"/>
<rect x="126.50" y="96.3" width="1.6" height="1.7" fill="#c4c4c4"/>
<rect x="130.06" y="96.3" width="1.6" height="1.7" fill="#c4c4c4"/>
<rect x="133.61" y="96.3" width="1.6" height="1.7" fill="#c4c4c4"/>
<rect x="137.17" y="96.3" width="1.6" height="1.7" fill="#c4c4c4"/>
<rect x="141.12" y="91.4" width="0.9" height="6.6" fill="#e0e0e0"/>
<rect x="144.27" y="96.3" width="1.6" height="1.7" fill="#c4c4c4"/>
<rect x="147.83" y="96.3" width="1.6" height="1.7" fill="#c4c4c4"/>
<rect x="151.38" y="96.3" width="1.6" height="1.7" fill="#c4c4c4"/>
<rect x="154.94" y="96.3" width="1.6" height="1.7" fill="#c4c4c4"/>
<rect x="158.89" y="95.2" width="0.9" height="2.8" fill="#d8d8d8"/>
<rect x="162.04" y="96.3" width="1.6" height="1.7" fill="#c4c4c4"/>
<rect x="165.60" y="96.3" width="1.6" height="1.7" fill="#c4c4c4"/>
<rect x="169.15" y="96.3" width="1.6" height="1.7" fill="#c4c4c4"/>
<rect x="172.71" y="96.3" width="1.6" height="1.7" fill="#c4c4c4"/>
<rect x="176.66" y="91.4" width="0.9" height="6.6" fill="#e0e0e0"/>
<rect x="179.81" y="96.3" width="1.6" height="1.7" fill="#c4c4c4"/>
<rect x="183.37" y="96.3" width="1.6" height="1.7" fill="#c4c4c4"/>
<rect x="186.92" y="96.3" width="1.6" height="1.7" fill="#c4c4c4"/>
<rect x="190.48" y="96.3" width="1.6" height="1.7" fill="#c4c4c4"/>
<rect x="194.43" y="95.2" width="0.9" height="2.8" fill="#d8d8d8"/>
<rect x="197.58" y="96.3" width="1.6" height="1.7" fill="#c4c4c4"/>
<rect x="201.14" y="96.3" width="1.6" height="1.7" fill="#c4c4c4"/>
<rect x="204.69" y="96.3" width="1.6" height="1.7" fill="#c4c4c4"/>
<rect x="208.25" y="96.3" width="1.6" height="1.7" fill="#c4c4c4"/>
<rect x="212.20" y="91.4" width="0.9" height="6.6" fill="#e0e0e0"/>
<rect x="215.35" y="96.3" width="1.6" height="1.7" fill="#c4c4c4"/>
<rect x="218.91" y="96.3" width="1.6" height="1.7" fill="#c4c4c4"/>
<rect x="222.46" y="96.3" width="1.6" height="1.7" fill="#c4c4c4"/>
<rect x="226.02" y="96.3" width="1.6" height="1.7" fill="#c4c4c4"/>
<rect x="229.97" y="95.2" width="0.9" height="2.8" fill="#d8d8d8"/>
<rect x="233.12" y="96.3" width="1.6" height="1.7" fill="#c4c4c4"/>
<rect x="236.68" y="96.3" width="1.6" height="1.7" fill="#c4c4c4"/>
<rect x="240.23" y="96.3" width="1.6" height="1.7" fill="#c4c4c4"/>
<rect x="243.79" y="96.3" width="1.6" height="1.7" fill="#c4c4c4"/>
<rect x="247.74" y="91.4" width="0.9" height="6.6" fill="#e0e0e0"/>
<rect x="250.89" y="96.3" width="1.6" height="1.7" fill="#c4c4c4"/>
<rect x="254.45" y="96.3" width="1.6" height="1.7" fill="#c4c4c4"/>
<rect x="258.00" y="96.3" width="1.6" height="1.7" fill="#c4c4c4"/>
<rect x="261.56" y="96.3" width="1.6" height="1.7" fill="#c4c4c4"/>
<rect x="265.51" y="95.2" width="0.9" height="2.8" fill="#d8d8d8"/>
<rect x="268.66" y="96.3" width="1.6" height="1.7" fill="#c4c4c4"/>
<rect x="272.22" y="96.3" width="1.6" height="1.7" fill="#c4c4c4"/>
<rect x="275.77" y="96.3" width="1.6" height="1.7" fill="#c4c4c4"/>
<rect x="279.33" y="96.3" width="1.6" height="1.7" fill="#c4c4c4"/>
<rect x="283.28" y="91.4" width="0.9" height="6.6" fill="#e0e0e0"/>
<rect x="286.43" y="96.3" width="1.6" height="1.7" fill="#c4c4c4"/>
<rect x="289.99" y="96.3" width="1.6" height="1.7" fill="#c4c4c4"/>
<rect x="293.54" y="96.3" width="1.6" height="1.7" fill="#c4c4c4"/>
<rect x="297.10" y="96.3" width="1.6" height="1.7" fill="#c4c4c4"/>
<rect x="301.05" y="95.2" width="0.9" height="2.8" fill="#d8d8d8"/>
<rect x="304.20" y="96.3" width="1.6" height="1.7" fill="#c4c4c4"/>
<rect x="307.76" y="96.3" width="1.6" height="1.7" fill="#c4c4c4"/>
<rect x="311.31" y="96.3" width="1.6" height="1.7" fill="#c4c4c4"/>
<rect x="314.87" y="96.3" width="1.6" height="1.7" fill="#c4c4c4"/>
<rect x="318.82" y="91.4" width="0.9" height="6.6" fill="#e0e0e0"/>
<rect x="321.97" y="96.3" width="1.6" height="1.7" fill="#c4c4c4"/>
<rect x="325.53" y="96.3" width="1.6" height="1.7" fill="#c4c4c4"/>
<rect x="329.08" y="96.3" width="1.6" height="1.7" fill="#c4c4c4"/>
<rect x="332.64" y="96.3" width="1.6" height="1.7" fill="#c4c4c4"/>
<rect x="336.59" y="95.2" width="0.9" height="2.8" fill="#d8d8d8"/>
<rect x="339.74" y="96.3" width="1.6" height="1.7" fill="#c4c4c4"/>
<rect x="343.30" y="96.3" width="1.6" height="1.7" fill="#c4c4c4"/>
<rect x="346.85" y="96.3" width="1.6" height="1.7" fill="#c4c4c4"/>
<rect x="350.41" y="96.3" width="1.6" height="1.7" fill="#c4c4c4"/>
<rect x="354.36" y="91.4" width="0.9" height="6.6" fill="#e0e0e0"/>
<rect x="357.51" y="96.3" width="1.6" height="1.7" fill="#c4c4c4"/>
<rect x="361.07" y="96.3" width="1.6" height="1.7" fill="#c4c4c4"/>
<rect x="364.62" y="96.3" width="1.6" height="1.7" fill="#c4c4c4"/>
<rect x="368.18" y="96.3" width="1.6" height="1.7" fill="#c4c4c4"/>
<rect x="372.13" y="95.2" width="0.9" height="2.8" fill="#d8d8d8"/>
<rect x="375.28" y="96.3" width="1.6" height="1.7" fill="#c4c4c4"/>
<rect x="378.84" y="96.3" width="1.6" height="1.7" fill="#c4c4c4"/>
<rect x="382.39" y="96.3" width="1.6" height="1.7" fill="#c4c4c4"/>
<rect x="385.95" y="96.3" width="1.6" height="1.7" fill="#c4c4c4"/>
<rect x="389.90" y="91.4" width="0.9" height="6.6" fill="#e0e0e0"/>
<rect x="393.05" y="96.3" width="1.6" height="1.7" fill="#c4c4c4"/>
<rect x="396.61" y="96.3" width="1.6" height="1.7" fill="#c4c4c4"/>
<rect x="400.16" y="96.3" width="1.6" height="1.7" fill="#c4c4c4"/>
<rect x="403.72" y="96.3" width="1.6" height="1.7" fill="#c4c4c4"/>
<rect x="407.67" y="95.2" width="0.9" height="2.8" fill="#d8d8d8"/>
<rect x="410.82" y="96.3" width="1.6" height="1.7" fill="#c4c4c4"/>
<rect x="414.38" y="96.3" width="1.6" height="1.7" fill="#c4c4c4"/>
<rect x="417.93" y="96.3" width="1.6" height="1.7" fill="#c4c4c4"/>
<rect x="421.49" y="96.3" width="1.6" height="1.7" fill="#c4c4c4"/>
<rect x="425.44" y="91.4" width="0.9" height="6.6" fill="#e0e0e0"/>
<rect x="428.59" y="96.3" width="1.6" height="1.7" fill="#c4c4c4"/>
<rect x="432.15" y="96.3" width="1.6" height="1.7" fill="#c4c4c4"/>
<rect x="435.70" y="96.3" width="1.6" height="1.7" fill="#c4c4c4"/>
<rect x="439.26" y="96.3" width="1.6" height="1.7" fill="#c4c4c4"/>
<rect x="443.21" y="95.2" width="0.9" height="2.8" fill="#d8d8d8"/>
<rect x="446.36" y="96.3" width="1.6" height="1.7" fill="#c4c4c4"/>
<rect x="449.92" y="96.3" width="1.6" height="1.7" fill="#c4c4c4"/>
<rect x="453.47" y="96.3" width="1.6" height="1.7" fill="#c4c4c4"/>
<rect x="457.03" y="96.3" width="1.6" height="1.7" fill="#c4c4c4"/>
<rect x="460.98" y="91.4" width="0.9" height="6.6" fill="#e0e0e0"/>
<rect x="464.13" y="96.3" width="1.6" height="1.7" fill="#c4c4c4"/>
<rect x="467.69" y="96.3" width="1.6" height="1.7" fill="#c4c4c4"/>
<rect x="471.24" y="96.3" width="1.6" height="1.7" fill="#c4c4c4"/>
<rect x="474.80" y="96.3" width="1.6" height="1.7" fill="#c4c4c4"/>
<rect x="478.75" y="95.2" width="0.9" height="2.8" fill="#d8d8d8"/>
<rect x="481.90" y="96.3" width="1.6" height="1.7" fill="#c4c4c4"/>
<rect x="485.46" y="96.3" width="1.6" height="1.7" fill="#c4c4c4"/>
<rect x="489.01" y="96.3" width="1.6" height="1.7" fill="#c4c4c4"/>
<rect x="492.57" y="96.3" width="1.6" height="1.7" fill="#c4c4c4"/>
<rect x="496.52" y="91.4" width="0.9" height="6.6" fill="#e0e0e0"/>
<rect x="499.67" y="96.3" width="1.6" height="1.7" fill="#c4c4c4"/>
<rect x="503.23" y="96.3" width="1.6" height="1.7" fill="#c4c4c4"/>
<rect x="506.78" y="96.3" width="1.6" height="1.7" fill="#c4c4c4"/>
<rect x="510.34" y="96.3" width="1.6" height="1.7" fill="#c4c4c4"/>
<rect x="514.29" y="95.2" width="0.9" height="2.8" fill="#d8d8d8"/>
<rect x="517.44" y="96.3" width="1.6" height="1.7" fill="#c4c4c4"/>
<rect x="521.00" y="96.3" width="1.6" height="1.7" fill="#c4c4c4"/>
<rect x="524.55" y="96.3" width="1.6" height="1.7" fill="#c4c4c4"/>
<rect x="528.11" y="96.3" width="1.6" height="1.7" fill="#c4c4c4"/>
<rect x="532.06" y="91.4" width="0.9" height="6.6" fill="#e0e0e0"/>
<rect x="535.21" y="96.3" width="1.6" height="1.7" fill="#c4c4c4"/>
<rect x="538.77" y="96.3" width="1.6" height="1.7" fill="#c4c4c4"/>
<rect x="542.32" y="96.3" width="1.6" height="1.7" fill="#c4c4c4"/>
<rect x="545.88" y="96.3" width="1.6" height="1.7" fill="#c4c4c4"/>
<rect x="549.83" y="95.2" width="0.9" height="2.8" fill="#d8d8d8"/>
<rect x="552.98" y="96.3" width="1.6" height="1.7" fill="#c4c4c4"/>
<rect x="556.54" y="96.3" width="1.6" height="1.7" fill="#c4c4c4"/>
<rect x="560.09" y="96.3" width="1.6" height="1.7" fill="#c4c4c4"/>
<rect x="563.65" y="96.3" width="1.6" height="1.7" fill="#c4c4c4"/>
<rect x="567.60" y="91.4" width="0.9" height="6.6" fill="#e0e0e0"/>
<rect x="570.75" y="96.3" width="1.6" height="1.7" fill="#c4c4c4"/>
<rect x="574.31" y="96.3" width="1.6" height="1.7" fill="#c4c4c4"/>
<rect x="577.86" y="96.3" width="1.6" height="1.7" fill="#c4c4c4"/>
<rect x="581.42" y="96.3" width="1.6" height="1.7" fill="#c4c4c4"/>
<rect x="585.37" y="95.2" width="0.9" height="2.8" fill="#d8d8d8"/>
<rect x="588.52" y="96.3" width="1.6" height="1.7" fill="#c4c4c4"/>
<rect x="592.08" y="96.3" width="1.6" height="1.7" fill="#c4c4c4"/>
<rect x="595.63" y="96.3" width="1.6" height="1.7" fill="#c4c4c4"/>
<rect x="599.19" y="96.3" width="1.6" height="1.7" fill="#c4c4c4"/>
<rect x="603.14" y="91.4" width="0.9" height="6.6" fill="#e0e0e0"/>
<rect x="606.29" y="96.3" width="1.6" height="1.7" fill="#c4c4c4"/>
<rect x="609.85" y="96.3" width="1.6" height="1.7" fill="#c4c4c4"/>
<rect x="613.40" y="96.3" width="1.6" height="1.7" fill="#c4c4c4"/>
<rect x="616.96" y="96.3" width="1.6" height="1.7" fill="#c4c4c4"/>
<rect x="620.91" y="95.2" width="0.9" height="2.8" fill="#d8d8d8"/>
<rect x="624.06" y="96.3" width="1.6" height="1.7" fill="#c4c4c4"/>
<rect x="627.62" y="96.3" width="1.6" height="1.7" fill="#c4c4c4"/>
<rect x="631.17" y="96.3" width="1.6" height="1.7" fill="#c4c4c4"/>
<rect x="634.73" y="96.3" width="1.6" height="1.7" fill="#c4c4c4"/>
<rect x="638.68" y="91.4" width="0.9" height="6.6" fill="#e0e0e0"/>
<rect x="641.83" y="96.3" width="1.6" height="1.7" fill="#c4c4c4"/>
<rect x="645.39" y="96.3" width="1.6" height="1.7" fill="#c4c4c4"/>
<rect x="648.94" y="96.3" width="1.6" height="1.7" fill="#c4c4c4"/>
<rect x="652.50" y="96.3" width="1.6" height="1.7" fill="#c4c4c4"/>
<rect x="656.45" y="95.2" width="0.9" height="2.8" fill="#d8d8d8"/>
<rect x="659.60" y="96.3" width="1.6" height="1.7" fill="#c4c4c4"/>
<rect x="663.16" y="96.3" width="1.6" height="1.7" fill="#c4c4c4"/>
<rect x="666.71" y="96.3" width="1.6" height="1.7" fill="#c4c4c4"/>
<rect x="670.27" y="96.3" width="1.6" height="1.7" fill="#c4c4c4"/>
<rect x="674.22" y="91.4" width="0.9" height="6.6" fill="#e0e0e0"/>
<rect x="677.37" y="96.3" width="1.6" height="1.7" fill="#c4c4c4"/>
<rect x="680.93" y="96.3" width="1.6" height="1.7" fill="#c4c4c4"/>
<rect x="684.48" y="96.3" width="1.6" height="1.7" fill="#c4c4c4"/>
<rect x="688.04" y="96.3" width="1.6" height="1.7" fill="#c4c4c4"/>
<rect x="691.99" y="95.2" width="0.9" height="2.8" fill="#d8d8d8"/>
<rect x="695.14" y="96.3" width="1.6" height="1.7" fill="#c4c4c4"/>
<rect x="698.70" y="96.3" width="1.6" height="1.7" fill="#c4c4c4"/>
<rect x="702.25" y="96.3" width="1.6" height="1.7" fill="#c4c4c4"/>
<rect x="705.81" y="96.3" width="1.6" height="1.7" fill="#c4c4c4"/>
<rect x="709.76" y="91.4" width="0.9" height="6.6" fill="#e0e0e0"/>
<rect x="712.91" y="96.3" width="1.6" height="1.7" fill="#c4c4c4"/>
<rect x="716.47" y="96.3" width="1.6" height="1.7" fill="#c4c4c4"/>
<rect x="720.02" y="96.3" width="1.6" height="1.7" fill="#c4c4c4"/>
<rect x="723.58" y="96.3" width="1.6" height="1.7" fill="#c4c4c4"/>
<rect x="727.53" y="95.2" width="0.9" height="2.8" fill="#d8d8d8"/>
<rect x="730.68" y="96.3" width="1.6" height="1.7" fill="#c4c4c4"/>
<rect x="734.24" y="96.3" width="1.6" height="1.7" fill="#c4c4c4"/>
<rect x="737.79" y="96.3" width="1.6" height="1.7" fill="#c4c4c4"/>
<rect x="741.35" y="96.3" width="1.6" height="1.7" fill="#c4c4c4"/>
<rect x="745.30" y="91.4" width="0.9" height="6.6" fill="#e0e0e0"/>
<rect x="748.45" y="96.3" width="1.6" height="1.7" fill="#c4c4c4"/>
<rect x="752.01" y="96.3" width="1.6" height="1.7" fill="#c4c4c4"/>
<rect x="755.56" y="96.3" width="1.6" height="1.7" fill="#c4c4c4"/>
<text x="35.9" y="95" font-size="3.6" fill="#dcdcdc">-8in</text>
<text x="71.4" y="95" font-size="3.6" fill="#dcdcdc">-6in</text>
<text x="107.0" y="95" font-size="3.6" fill="#dcdcdc">-4in</text>
<text x="142.5" y="95" font-size="3.6" fill="#dcdcdc">-2in</text>
<text x="178.1" y="95" font-size="3.6" fill="#dcdcdc">0in</text>
<text x="213.6" y="95" font-size="3.6" fill="#dcdcdc">2in</text>
<text x="249.1" y="95" font-size="3.6" fill="#dcdcdc">4in</text>
<text x="284.7" y="95" font-size="3.6" fill="#dcdcdc">6in</text>
<text x="320.2" y="95" font-size="3.6" fill="#dcdcdc">8in</text>
<text x="355.8" y="95" font-size="3.6" fill="#dcdcdc">10in</text>
<text x="391.3" y="95" font-size="3.6" fill="#dcdcdc">12in</text>
<text x="426.8" y="95" font-size="3.6" fill="#dcdcdc">14in</text>
<text x="462.4" y="95" font-size="3.6" fill="#dcdcdc">16in</text>
<text x="497.9" y="95" font-size="3.6" fill="#dcdcdc">18in</text>
<text x="533.5" y="95" font-size="3.6" fill="#dcdcdc">20in</text>
<text x="569.0" y="95" font-size="3.6" fill="#dcdcdc">22in</text>
<text x="604.5" y="95" font-size="3.6" fill="#dcdcdc">24in</text>
<text x="640.1" y="95" font-size="3.6" fill="#dcdcdc">26in</text>
<text x="675.6" y="95" font-size="3.6" fill="#dcdcdc">28in</text>
<text x="711.2" y="95" font-size="3.6" fill="#dcdcdc">30in</text>
<text x="746.7" y="95" font-size="3.6" fill="#dcdcdc">32in</text>
<rect x="6.0" y="101.85" width="1.8" height="1.5" fill="#bcbcbc"/>
<rect x="6.0" y="105.35" width="1.8" height="1.5" fill="#bcbcbc"/>
<rect x="6.0" y="108.86" width="1.8" height="1.5" fill="#bcbcbc"/>
<rect x="6.0" y="112.36" width="1.8" height="1.5" fill="#bcbcbc"/>
<rect x="6.0" y="115.87" width="1.8" height="1.5" fill="#bcbcbc"/>
<rect x="4.8" y="119.77" width="3" height="0.9" fill="#d8d8d8"/>
<rect x="6.0" y="122.88" width="1.8" height="1.5" fill="#bcbcbc"/>
<rect x="6.0" y="126.38" width="1.8" height="1.5" fill="#bcbcbc"/>
<rect x="6.0" y="129.89" width="1.8" height="1.5" fill="#bcbcbc"/>
<rect x="6.0" y="133.39" width="1.8" height="1.5" fill="#bcbcbc"/>
<rect x="1" y="137.30" width="6.8" height="0.9" fill="#e0e0e0"/>
<rect x="6.0" y="140.40" width="1.8" height="1.5" fill="#bcbcbc"/>
<rect x="6.0" y="143.91" width="1.8" height="1.5" fill="#bcbcbc"/>
<rect x="6.0" y="147.41" width="1.8" height="1.5" fill="#bcbcbc"/>
<rect x="6.0" y="150.92" width="1.8" height="1.5" fill="#bcbcbc"/>
<rect x="4.8" y="154.82" width="3" height="0.9" fill="#d8d8d8"/>
<rect x="6.0" y="157.93" width="1.8" height="1.5" fill="#bcbcbc"/>
<rect x="6.0" y="161.43" width="1.8" height="1.5" fill="#bcbcbc"/>
<rect x="6.0" y="164.94" width="1.8" height="1.5" fill="#bcbcbc"/>
<rect x="6.0" y="168.44" width="1.8" height="1.5" fill="#bcbcbc"/>
<rect x="1" y="172.35" width="6.8" height="0.9" fill="#e0e0e0"/>
<rect x="6.0" y="175.45" width="1.8" height="1.5" fill="#bcbcbc"/>
<rect x="6.0" y="178.96" width="1.8" height="1.5" fill="#bcbcbc"/>
<rect x="6.0" y="182.46" width="1.8" height="1.5" fill="#bcbcbc"/>
<rect x="6.0" y="185.97" width="1.8" height="1.5" fill="#bcbcbc"/>
<rect x="4.8" y="189.87" width="3" height="0.9" fill="#d8d8d8"/>
<rect x="6.0" y="192.98" width="1.8" height="1.5" fill="#bcbcbc"/>
<rect x="6.0" y="196.48" width="1.8" height="1.5" fill="#bcbcbc"/>
<rect x="6.0" y="199.99" width="1.8" height="1.5" fill="#bcbcbc"/>
<rect x="6.0" y="203.49" width="1.8" height="1.5" fill="#bcbcbc"/>
<rect x="1" y="207.40" width="6.8" height="0.9" fill="#e0e0e0"/>
<rect x="6.0" y="210.50" width="1.8" height="1.5" fill="#bcbcbc"/>
<rect x="6.0" y="214.01" width="1.8" height="1.5" fill="#bcbcbc"/>
<rect x="6.0" y="217.51" width="1.8" height="1.5" fill="#bcbcbc"/>
<rect x="6.0" y="221.02" width="1.8" height="1.5" fill="#bcbcbc"/>
<rect x="4.8" y="224.92" width="3" height="0.9" fill="#d8d8d8"/>
<rect x="6.0" y="228.03" width="1.8" height="1.5" fill="#bcbcbc"/>
<rect x="6.0" y="231.53" width="1.8" height="1.5" fill="#bcbcbc"/>
<rect x="6.0" y="235.04" width="1.8" height="1.5" fill="#bcbcbc"/>
<rect x="6.0" y="238.54" width="1.8" height="1.5" fill="#bcbcbc"/>
<rect x="1" y="242.45" width="6.8" height="0.9" fill="#e0e0e0"/>
<rect x="6.0" y="245.55" width="1.8" height="1.5" fill="#bcbcbc"/>
<rect x="6.0" y="249.06" width="1.8" height="1.5" fill="#bcbcbc"/>
<rect x="6.0" y="252.56" width="1.8" height="1.5" fill="#bcbcbc"/>
<rect x="6.0" y="256.07" width="1.8" height="1.5" fill="#bcbcbc"/>
<rect x="4.8" y="259.98" width="3" height="0.9" fill="#d8d8d8"/>
<rect x="6.0" y="263.08" width="1.8" height="1.5" fill="#bcbcbc"/>
<rect x="6.0" y="266.58" width="1.8" height="1.5" fill="#bcbcbc"/>
<rect x="6.0" y="270.09" width="1.8" height="1.5" fill="#bcbcbc"/>
<rect x="6.0" y="273.59" width="1.8" height="1.5" fill="#bcbcbc"/>
<rect x="1" y="277.50" width="6.8" height="0.9" fill="#e0e0e0"/>
<rect x="6.0" y="280.60" width="1.8" height="1.5" fill="#bcbcbc"/>
<rect x="6.0" y="284.11" width="1.8" height="1.5" fill="#bcbcbc"/>
<rect x="6.0" y="287.61" width="1.8" height="1.5" fill="#bcbcbc"/>
<rect x="6.0" y="291.12" width="1.8" height="1.5" fill="#bcbcbc"/>
<rect x="4.8" y="295.02" width="3" height="0.9" fill="#d8d8d8"/>
<rect x="6.0" y="298.13" width="1.8" height="1.5" fill="#bcbcbc"/>
<rect x="6.0" y="301.63" width="1.8" height="1.5" fill="#bcbcbc"/>
<rect x="6.0" y="305.14" width="1.8" height="1.5" fill="#bcbcbc"/>
<rect x="6.0" y="308.64" width="1.8" height="1.5" fill="#bcbcbc"/>
<rect x="1" y="312.55" width="6.8" height="0.9" fill="#e0e0e0"/>
<rect x="6.0" y="315.65" width="1.8" height="1.5" fill="#bcbcbc"/>
<rect x="6.0" y="319.16" width="1.8" height="1.5" fill="#bcbcbc"/>
<rect x="6.0" y="322.66" width="1.8" height="1.5" fill="#bcbcbc"/>
<rect x="6.0" y="326.17" width="1.8" height="1.5" fill="#bcbcbc"/>
<rect x="4.8" y="330.08" width="3" height="0.9" fill="#d8d8d8"/>
<rect x="6.0" y="333.18" width="1.8" height="1.5" fill="#bcbcbc"/>
<rect x="6.0" y="336.69" width="1.8" height="1.5" fill="#bcbcbc"/>
<rect x="6.0" y="340.19" width="1.8" height="1.5" fill="#bcbcbc"/>
<rect x="6.0" y="343.69" width="1.8" height="1.5" fill="#bcbcbc"/>
<rect x="1" y="347.60" width="6.8" height="0.9" fill="#e0e0e0"/>
<rect x="6.0" y="350.70" width="1.8" height="1.5" fill="#bcbcbc"/>
<rect x="6.0" y="354.21" width="1.8" height="1.5" fill="#bcbcbc"/>
<rect x="6.0" y="357.71" width="1.8" height="1.5" fill="#bcbcbc"/>
<rect x="6.0" y="361.22" width="1.8" height="1.5" fill="#bcbcbc"/>
<rect x="4.8" y="365.12" width="3" height="0.9" fill="#d8d8d8"/>
<rect x="6.0" y="368.23" width="1.8" height="1.5" fill="#bcbcbc"/>
<rect x="6.0" y="371.73" width="1.8" height="1.5" fill="#bcbcbc"/>
<rect x="6.0" y="375.24" width="1.8" height="1.5" fill="#bcbcbc"/>
<rect x="6.0" y="378.74" width="1.8" height="1.5" fill="#bcbcbc"/>
<rect x="1" y="382.65" width="6.8" height="0.9" fill="#e0e0e0"/>
<rect x="6.0" y="385.75" width="1.8" height="1.5" fill="#bcbcbc"/>
<rect x="6.0" y="389.26" width="1.8" height="1.5" fill="#bcbcbc"/>
<rect x="6.0" y="392.76" width="1.8" height="1.5" fill="#bcbcbc"/>
<rect x="6.0" y="396.27" width="1.8" height="1.5" fill="#bcbcbc"/>
<rect x="4.8" y="400.18" width="3" height="0.9" fill="#d8d8d8"/>
<rect x="6.0" y="403.28" width="1.8" height="1.5" fill="#bcbcbc"/>
<rect x="6.0" y="406.78" width="1.8" height="1.5" fill="#bcbcbc"/>
<text transform="translate(5.2 136.7) rotate(-90)" font-size="3.6" fill="#dcdcdc">10in</text>
<text transform="translate(5.2 171.8) rotate(-90)" font-size="3.6" fill="#dcdcdc">8in</text>
<text transform="translate(5.2 206.8) rotate(-90)" font-size="3.6" fill="#dcdcdc">6in</text>
<text transform="translate(5.2 241.9) rotate(-90)" font-size="3.6" fill="#dcdcdc">4in</text>
<text transform="translate(5.2 276.9) rotate(-90)" font-size="3.6" fill="#dcdcdc">2in</text>
<text transform="translate(5.2 312.0) rotate(-90)" font-size="3.6" fill="#dcdcdc">0in</text>
<text transform="translate(5.2 347.0) rotate(-90)" font-size="3.6" fill="#dcdcdc">2in</text>
<text transform="translate(5.2 382.1) rotate(-90)" font-size="3.6" fill="#dcdcdc">4in</text>
<rect x="0" y="90.4" width="6.6" height="7" fill="#e8e8e8"/><path d="M1.6 92l3 2-3 2z" fill="#222"/>
</g>
<g id="scrollbars">
<rect x="760" y="98" width="8" height="321" fill="#6e6e6e"/>
<rect x="760" y="98" width="0.8" height="313" fill="#5c5c5c"/>
<rect x="760.6" y="201" width="7.4" height="39" fill="#545454"/>
<path d="M762.4 102h3.2l-1.6-1.9z" fill="#eee"/>
<path d="M762.4 406.4h3.2l-1.6 1.9z" fill="#eee"/>
<rect x="0" y="411.3" width="760" height="7.6" fill="#6e6e6e"/>
<rect x="0" y="411.3" width="9" height="7.6" fill="#4a4a4a"/>
<rect x="9.6" y="411.6" width="29" height="7.3" fill="#787878"/>
<rect x="40.6" y="411.6" width="42" height="7.3" fill="#5a5a5a"/>
<rect x="83.4" y="405" width="1" height="14" fill="#fff"/>
<rect x="86.6" y="412" width="6" height="6.4" fill="#5c5c5c"/><path d="M88.6 414.2l2 1.2-2 1.2z" fill="#ddd"/>
<rect x="419" y="411.6" width="95" height="7.3" fill="#525252"/>
<rect x="755.4" y="412" width="5" height="6.6" fill="#5c5c5c"/><path d="M757.2 414l1.8 1.3-1.8 1.3z" fill="#eee"/>
<path d="M2.6 413.4l-1.6 1.7 1.6 1.7" stroke="#ccc" stroke-width="0.7" fill="none"/>
<circle cx="14.6" cy="415.2" r="2.2" fill="#222"/><path d="M13 413.6l2.4 0.4-0.6 2.4" stroke="#fff" stroke-width="0.8" fill="none"/>
<text x="19.6" y="417.0" font-size="5.2" fill="#e0e0e0" textLength="14.9" lengthAdjust="spacingAndGlyphs" stroke="#e0e0e0" stroke-width="0.16">Model</text>
<path d="M43.6 412.6h3.2l1.2 1.2v4h-4.4z" fill="#f0f0f0"/>
<text x="50.0" y="417.0" font-size="5.2" fill="#9a9a9a" textLength="16.5" lengthAdjust="spacingAndGlyphs" stroke="#9a9a9a" stroke-width="0.16">Paper 1</text>
</g>
<g id="bottom">
<rect x="0" y="418.9" width="768" height="19.9" fill="#464646"/>
<rect x="0" y="418.9" width="1.6" height="19.9" fill="#2c2c2c"/>
<rect x="0" y="438.8" width="768" height="11.2" fill="#575757"/>
<g transform="translate(11.0 429.0)" fill="none" stroke-linecap="round" stroke-linejoin="round"><path d="M-3.6-1.6a4.2 4.2 0 0 0 4.4 5.4l-2-2.6z" fill="#d83a2a"/><path d="M-1-2.8l3.6 1.4-1.6 3.4" stroke="#f0e8c0" stroke-width="1" stroke-dasharray="0.9 0.7"/><circle cx="1.8" cy="-2.6" r="0.8" fill="#fff"/></g>
<g transform="translate(23.8 429.0)" fill="none" stroke-linecap="round" stroke-linejoin="round"><path d="M-3.2-3.2l6.4 6.4M3.2-3.2l-6.4 6.4" stroke="#9a9a9a" stroke-width="0.9"/></g>
<rect x="32" y="424.6" width="9.4" height="8.8" fill="#7a7a7a"/><path d="M34.3 424.6v8.8M36.7 424.6v8.8M39 424.6v8.8M32 426.8h9.4M32 429h9.4M32 431.2h9.4" stroke="#565656" stroke-width="0.5"/>
<text x="47.3" y="425.6" font-size="5.1" fill="#dedede" textLength="16.3" lengthAdjust="spacingAndGlyphs" stroke="#dedede" stroke-width="0.16">Scale X</text>
<rect x="47.3" y="428.2" width="24" height="9" fill="#4a4a4a" stroke="#6a6a6a" stroke-width="0.7"/>
<rect x="64.2" y="428.6" width="6.8" height="8.2" fill="#2e2e2e" stroke="#6a6a6a" stroke-width="0.5"/><path d="M67.60000000000001 429.4v6.6M64.8 432.7h5.6" stroke="#b4b4b4" stroke-width="0.55"/>
<text x="73.3" y="425.6" font-size="5.1" fill="#dedede" textLength="16.3" lengthAdjust="spacingAndGlyphs" stroke="#dedede" stroke-width="0.16">Scale Y</text>
<rect x="73.3" y="428.2" width="24" height="9" fill="#4a4a4a" stroke="#6a6a6a" stroke-width="0.7"/>
<rect x="90.2" y="428.6" width="6.8" height="8.2" fill="#2e2e2e" stroke="#6a6a6a" stroke-width="0.5"/><path d="M93.60000000000001 429.4v6.6M90.8 432.7h5.6" stroke="#b4b4b4" stroke-width="0.55"/>
<text x="99.3" y="425.6" font-size="5.1" fill="#dedede" textLength="16.1" lengthAdjust="spacingAndGlyphs" stroke="#dedede" stroke-width="0.16">Scale Z</text>
<rect x="99.3" y="428.2" width="24" height="9" fill="#4a4a4a" stroke="#6a6a6a" stroke-width="0.7"/>
<rect x="116.2" y="428.6" width="6.8" height="8.2" fill="#2e2e2e" stroke="#6a6a6a" stroke-width="0.5"/><path d="M119.60000000000001 429.4v6.6M116.8 432.7h5.6" stroke="#b4b4b4" stroke-width="0.55"/>
<text x="125.3" y="425.6" font-size="5.1" fill="#dedede" textLength="13.7" lengthAdjust="spacingAndGlyphs" stroke="#dedede" stroke-width="0.16">Size X</text>
<rect x="125.3" y="428.2" width="24" height="9" fill="#4a4a4a" stroke="#6a6a6a" stroke-width="0.7"/>
<text x="151.3" y="425.6" font-size="5.1" fill="#dedede" textLength="13.6" lengthAdjust="spacingAndGlyphs" stroke="#dedede" stroke-width="0.16">Size Y</text>
<rect x="151.3" y="428.2" width="24" height="9" fill="#4a4a4a" stroke="#6a6a6a" stroke-width="0.7"/>
<text x="177.3" y="425.6" font-size="5.1" fill="#dedede" textLength="13.4" lengthAdjust="spacingAndGlyphs" stroke="#dedede" stroke-width="0.16">Size Z</text>
<rect x="177.3" y="428.2" width="24" height="9" fill="#4a4a4a" stroke="#6a6a6a" stroke-width="0.7"/>
<text x="203.3" y="425.6" font-size="5.1" fill="#dedede" textLength="12.7" lengthAdjust="spacingAndGlyphs" stroke="#dedede" stroke-width="0.16">Pos X</text>
<rect x="203.3" y="428.2" width="24" height="9" fill="#4a4a4a" stroke="#6a6a6a" stroke-width="0.7"/>
<text x="229.3" y="425.6" font-size="5.1" fill="#dedede" textLength="12.6" lengthAdjust="spacingAndGlyphs" stroke="#dedede" stroke-width="0.16">Pos Y</text>
<rect x="229.3" y="428.2" width="24" height="9" fill="#4a4a4a" stroke="#6a6a6a" stroke-width="0.7"/>
<text x="255.3" y="425.6" font-size="5.1" fill="#dedede" textLength="12.4" lengthAdjust="spacingAndGlyphs" stroke="#dedede" stroke-width="0.16">Pos Z</text>
<rect x="255.3" y="428.2" width="24" height="9" fill="#4a4a4a" stroke="#6a6a6a" stroke-width="0.7"/>
<text x="281.3" y="425.6" font-size="5.1" fill="#dedede" textLength="15.6" lengthAdjust="spacingAndGlyphs" stroke="#dedede" stroke-width="0.16">Delta X</text>
<rect x="281.3" y="428.2" width="24" height="9" fill="#4a4a4a" stroke="#6a6a6a" stroke-width="0.7"/>
<text x="307.3" y="425.6" font-size="5.1" fill="#dedede" textLength="15.5" lengthAdjust="spacingAndGlyphs" stroke="#dedede" stroke-width="0.16">Delta Y</text>
<rect x="307.3" y="428.2" width="24" height="9" fill="#4a4a4a" stroke="#6a6a6a" stroke-width="0.7"/>
<text x="333.3" y="425.6" font-size="5.1" fill="#dedede" textLength="15.3" lengthAdjust="spacingAndGlyphs" stroke="#dedede" stroke-width="0.16">Delta Z</text>
<rect x="333.3" y="428.2" width="24" height="9" fill="#4a4a4a" stroke="#6a6a6a" stroke-width="0.7"/>
<text x="359.3" y="425.6" font-size="5.1" fill="#dedede" textLength="11.9" lengthAdjust="spacingAndGlyphs" stroke="#dedede" stroke-width="0.16">Rot X</text>
<rect x="359.3" y="428.2" width="24" height="9" fill="#4a4a4a" stroke="#6a6a6a" stroke-width="0.7"/>
<rect x="376.2" y="428.6" width="6.8" height="8.2" fill="#2e2e2e" stroke="#6a6a6a" stroke-width="0.5"/><path d="M379.59999999999997 429.4v6.6M376.8 432.7h5.6" stroke="#b4b4b4" stroke-width="0.55"/>
<text x="385.3" y="425.6" font-size="5.1" fill="#dedede" textLength="11.8" lengthAdjust="spacingAndGlyphs" stroke="#dedede" stroke-width="0.16">Rot Y</text>
<rect x="385.3" y="428.2" width="24" height="9" fill="#4a4a4a" stroke="#6a6a6a" stroke-width="0.7"/>
<rect x="402.2" y="428.6" width="6.8" height="8.2" fill="#2e2e2e" stroke="#6a6a6a" stroke-width="0.5"/><path d="M405.59999999999997 429.4v6.6M402.8 432.7h5.6" stroke="#b4b4b4" stroke-width="0.55"/>
<text x="411.3" y="425.6" font-size="5.1" fill="#dedede" textLength="11.6" lengthAdjust="spacingAndGlyphs" stroke="#dedede" stroke-width="0.16">Rot Z</text>
<rect x="411.3" y="428.2" width="24" height="9" fill="#4a4a4a" stroke="#6a6a6a" stroke-width="0.7"/>
<rect x="428.2" y="428.6" width="6.8" height="8.2" fill="#2e2e2e" stroke="#6a6a6a" stroke-width="0.5"/><path d="M431.59999999999997 429.4v6.6M428.8 432.7h5.6" stroke="#b4b4b4" stroke-width="0.55"/>
<text x="437.3" y="425.6" font-size="5.1" fill="#dedede" textLength="21.9" lengthAdjust="spacingAndGlyphs" stroke="#dedede" stroke-width="0.16">Delta Dist.</text>
<rect x="437.3" y="428.2" width="24" height="9" fill="#4a4a4a" stroke="#6a6a6a" stroke-width="0.7"/>
<text x="463.3" y="425.6" font-size="5.1" fill="#dedede" textLength="20.6" lengthAdjust="spacingAndGlyphs" stroke="#dedede" stroke-width="0.16">Delta Ang</text>
<rect x="463.3" y="428.2" width="24" height="9" fill="#4a4a4a" stroke="#6a6a6a" stroke-width="0.7"/>
<rect x="480.2" y="428.6" width="6.8" height="8.2" fill="#2e2e2e" stroke="#6a6a6a" stroke-width="0.5"/><path d="M483.59999999999997 429.4v6.6M480.8 432.7h5.6" stroke="#b4b4b4" stroke-width="0.55"/>
<g transform="translate(497.5 429.0)" fill="none" stroke-linecap="round" stroke-linejoin="round"><rect x="-1.6" y="-3" width="5" height="3.6" rx="0.6" stroke="#e8e8e8" stroke-width="0.8"/><rect x="-3.4" y="-1" width="5" height="3.6" rx="0.6" fill="#424242" stroke="#e8e8e8" stroke-width="0.8"/><path d="M-2.8 3.4l1.6-1" stroke="#e8e8e8" stroke-width="0.7"/></g>
<g transform="translate(510.5 429.0)" fill="none" stroke-linecap="round" stroke-linejoin="round"><path d="M-3.4-3h3M-3.4-1h3M0.6-3.2v3.2M0.6 0.8h3M0.6 2.8h3M-1 0.4l3 3" stroke="#e8e8e8" stroke-width="0.8"/></g>
<g transform="translate(524.0 429.0)" fill="none" stroke-linecap="round" stroke-linejoin="round"><path d="M-3.2 0.4l2.4-2.4q2 0.4 3.6 3.2" stroke="#e8e8e8" stroke-width="0.9"/><path d="M-0.6-2.6l-0.6 2.6" stroke="#e8e8e8" stroke-width="0.7"/></g>
<rect x="533.4" y="423.4" width="11.2" height="11.2" fill="#6a8ac4"/>
<g transform="translate(539.0 429.0)" fill="none" stroke-linecap="round" stroke-linejoin="round"><rect x="-3.4" y="-3.4" width="6.8" height="6.8" fill="#20b040"/><path d="M-3.4-3.4l6.8 6.8v-6.8z" fill="#18802c"/><path d="M-3.4 3.4v-6.8h6.8" stroke="#e8f8e8" stroke-width="0.7"/></g>
<g transform="translate(551.8 429.0)" fill="none" stroke-linecap="round" stroke-linejoin="round"><rect x="-2.6" y="-2.2" width="6" height="5.8" fill="#20a89a"/><path d="M-3.6 3.6v-7h7" stroke="#f0f0f0" stroke-width="0.8"/><path d="M-1.6 1.6l3.6-3.6" stroke="#f0f0f0" stroke-width="0.8"/></g>
<g transform="translate(564.4 429.0)" fill="none" stroke-linecap="round" stroke-linejoin="round"><rect x="-3" y="-3.2" width="6.2" height="6.4" fill="#22c040"/><path d="M-3.6 3.6h7.4" stroke="#f0f0f0" stroke-width="0.9"/><path d="M0.6-1.6v3.4" stroke="#106020" stroke-width="1.4"/></g>
<g transform="translate(579.0 429.0)" fill="none" stroke-linecap="round" stroke-linejoin="round"><path d="M-3.4-2.6h6.6v2.6h-3.4v2.6" stroke="#22c040" stroke-width="1.5"/><path d="M-3.8-3.4h7.4" stroke="#f0f0f0" stroke-width="0.6"/></g>
<path d="M586.3 422.4v13.2" stroke="#5e5e5e" stroke-width="0.8"/>
<g transform="translate(593.2 429.0)" fill="none" stroke-linecap="round" stroke-linejoin="round"><path d="M-3.2-2.4h6v2.4h-3v2.8" stroke="#22c040" stroke-width="1.5"/><path d="M1.2 1l2 1.4-2 1.4" stroke="#f0f0f0" stroke-width="0.7"/></g>
<g transform="translate(606.0 429.0)" fill="none" stroke-linecap="round" stroke-linejoin="round"><path d="M-3-3.2h3.6v3.6" stroke="#d83030" stroke-width="0.9"/><path d="M-1.2-0.8l3.8 3.8" stroke="#5a8ad8" stroke-width="1"/><path d="M-3.2 3.2h3M1.6-3v2.4" stroke="#e8e8e8" stroke-width="0.6" stroke-dasharray="0.8 0.6"/></g>
<g transform="translate(618.6 429.0)" fill="none" stroke-linecap="round" stroke-linejoin="round"><path d="M0-3.4l3.6 6.4h-7.2z" fill="#d82a2a"/><path d="M0-0.8l1.4 2.6h-2.8z" fill="#fff"/></g>
<g transform="translate(631.0 429.0)" fill="none" stroke-linecap="round" stroke-linejoin="round"><path d="M0-3.2l-3.2 6h6.4zM0-3.2v6M-1.8 0.8h3.6" stroke="#808080" stroke-width="0.7"/></g>
<g transform="translate(644.0 429.0)" fill="none" stroke-linecap="round" stroke-linejoin="round"><rect x="-3.6" y="-3.6" width="7.2" height="7.2" stroke="#f0f0f0" stroke-width="0.9"/><rect x="-1.6" y="-0.6" width="3.6" height="3.6" stroke="#d83030" stroke-width="0.9"/><path d="M-3.6-1.6h7.2" stroke="#d05070" stroke-width="0.7"/></g>
<g transform="translate(656.6 429.0)" fill="none" stroke-linecap="round" stroke-linejoin="round"><path d="M-3.6-3.6h7.2v7.2h-7.2zM0-3.6v7.2M-3.6 0h7.2" stroke="#cacaca" stroke-width="0.8"/></g>
<g transform="translate(669.0 429.0)" fill="none" stroke-linecap="round" stroke-linejoin="round"><path d="M-3 3.4v-5.6M-0.6 3.4v-5.6M-3.6-0.4h4M-3.6 2h4" stroke="#c4c4c4" stroke-width="0.65"/><path d="M1.6-1.6l2-2" stroke="#c4c4c4" stroke-width="0.65"/><circle cx="3.4" cy="-3.2" r="0.6" fill="#fff"/></g>
<g transform="translate(682.0 429.0)" fill="none" stroke-linecap="round" stroke-linejoin="round"><path d="M-3.6 3.2v-3h3v-2h3.2" stroke="#c4c4c4" stroke-width="0.65"/><path d="M-2.4 1.8l4.8-4.2" stroke="#bbb" stroke-width="0.6"/><rect x="-0.8" y="0.2" width="2.6" height="2.6" stroke="#dcdcdc" stroke-width="0.6"/></g>
<g transform="translate(695.4 429.0)" fill="none" stroke-linecap="round" stroke-linejoin="round"><path d="M-3-2.6h3.4q2 0 2 2v3.6M-1 1h2.4v2.2h-2.4z" stroke="#c4c4c4" stroke-width="0.65"/><path d="M-3.4-1l1.4-1.6" stroke="#dcdcdc" stroke-width="0.6"/></g>
<g transform="translate(707.4 429.0)" fill="none" stroke-linecap="round" stroke-linejoin="round"><path d="M-3.4 3v-2.6h3.2v-2.4h3.4M-1.6 3h2.6v-1.8" stroke="#c4c4c4" stroke-width="0.65"/></g>
<g transform="translate(720.0 429.0)" fill="none" stroke-linecap="round" stroke-linejoin="round"><path d="M-3.4 0.4h6.8M-2-2v5.4M1-3.4v6.8M-3.4 2.6h4.4" stroke="#c4c4c4" stroke-width="0.65"/><circle cx="2.8" cy="-2.6" r="0.7" fill="#eee"/></g>
<g transform="translate(733.6 429.0)" fill="none" stroke-linecap="round" stroke-linejoin="round"><path d="M-3.6-2.6v6h7.2" stroke="#4a8ae0" stroke-width="1.3"/><path d="M3.6-3.4v5" stroke="#e03030" stroke-width="1.3"/><path d="M-1-0.2h3" stroke="#e8e8e8" stroke-width="0.6"/></g>
<g transform="translate(746.6 429.0)" fill="none" stroke-linecap="round" stroke-linejoin="round"><rect x="-3.6" y="-3.6" width="7.2" height="7.2" stroke="#d24860" stroke-width="1.2"/><rect x="-1.8" y="-1.8" width="3.6" height="3.6" fill="#5a7ad0"/><path d="M-3.6-3.6l1.8 1.8M3.6-3.6l-1.8 1.8M-3.6 3.6l1.8-1.8M3.6 3.6l-1.8-1.8" stroke="#e8e8e8" stroke-width="0.6"/></g>
<text x="3.8" y="446.1" font-size="5.5" fill="#ececec" textLength="36.2" lengthAdjust="spacingAndGlyphs" stroke="#ececec" stroke-width="0.16">Select object(s)</text>
<text x="554.8" y="446.2" font-size="5.2" fill="#e4e4e4" textLength="12.8" lengthAdjust="spacingAndGlyphs" stroke="#e4e4e4" stroke-width="0.16">SNAP</text>
<text x="570.0" y="446.2" font-size="5.2" fill="#e4e4e4" textLength="11.0" lengthAdjust="spacingAndGlyphs" stroke="#e4e4e4" stroke-width="0.16">GEO</text>
<path d="M589.4 441.4h3.2v2.4h-3.2zM591.0 443.8v3.4" stroke="#e8e8e8" stroke-width="0.7" fill="none"/>
<rect x="594.8" y="440.8" width="32.4" height="6.8" fill="#1e1e1e" stroke="#8a8a8a" stroke-width="0.6"/>
<text x="596.8" y="446.0" font-size="5.0" fill="#e8e8e8" textLength="19.1" lengthAdjust="spacingAndGlyphs" stroke="#e8e8e8" stroke-width="0.16">7.4618 in</text>
<path d="M631.4 441.4h3.2v2.4h-3.2zM633.0 443.8v3.4" stroke="#e8e8e8" stroke-width="0.7" fill="none"/>
<rect x="637.2" y="440.8" width="31.8" height="6.8" fill="#1e1e1e" stroke="#8a8a8a" stroke-width="0.6"/>
<text x="639.2" y="446.0" font-size="5.0" fill="#e8e8e8" textLength="21.7" lengthAdjust="spacingAndGlyphs" stroke="#e8e8e8" stroke-width="0.16">10.0673 in</text>
<path d="M673.9 441.4h3.2v2.4h-3.2zM675.5 443.8v3.4" stroke="#7a7a7a" stroke-width="0.7" fill="none"/>
<rect x="679" y="440.8" width="32.0" height="6.8" fill="#3c3c3c" stroke="#8a8a8a" stroke-width="0.6"/>
<text x="681.0" y="446.0" font-size="5.0" fill="#7a7a7a" textLength="19.1" lengthAdjust="spacingAndGlyphs" stroke="#7a7a7a" stroke-width="0.16">0.3289 in</text>
<text x="716.0" y="446.0" font-size="5.2" fill="#e4e4e4" textLength="12.5" lengthAdjust="spacingAndGlyphs" stroke="#e4e4e4" stroke-width="0.16">138%</text>
<text x="742.2" y="446.0" font-size="5.2" fill="#e4e4e4" textLength="21.3" lengthAdjust="spacingAndGlyphs" stroke="#e4e4e4" stroke-width="0.16">11:59 AM</text>
</g>
</svg>
<svg id="dwg" width="768" height="450" viewBox="0 0 768 450" font-family="Liberation Sans, sans-serif">
<rect x="169.9" y="143.9" width="426.0" height="247.4" fill="#c6dfc6" stroke="#000" stroke-width="3.2"/>
<rect x="195.3" y="175.6" width="62.2" height="28.6" fill="#000"/>
<rect x="273.3" y="175.6" width="62.5" height="28.6" fill="#000"/>
<rect x="351.5" y="175.6" width="62.3" height="28.6" fill="#000"/>
<rect x="429.8" y="175.6" width="62.3" height="28.6" fill="#000"/>
<rect x="508.0" y="175.6" width="62.4" height="28.6" fill="#000"/>
<rect x="281.7" y="273.0" width="25.0" height="16.7" fill="#000"/>
<path d="M112.0 267.5L655.8 267.5" stroke="#3d7a98" stroke-width="0.8" stroke-opacity="0.62" fill="none"/>
<path d="M356.2 232.2L638.0 232.2" stroke="#3d7a98" stroke-width="0.8" stroke-opacity="0.62" fill="none"/>
<path d="M154.2 352.0L498.0 352.0" stroke="#3d7a98" stroke-width="0.8" stroke-opacity="0.62" fill="none"/>
<circle cx="226.6" cy="164.2" r="6.2" fill="#000"/>
<circle cx="305.4" cy="164.2" r="6.2" fill="#000"/>
<circle cx="460.9" cy="164.2" r="6.2" fill="#000"/>
<circle cx="305.6" cy="229.7" r="4.3" fill="#000"/>
<circle cx="356.2" cy="232.2" r="6.3" fill="#000"/>
<circle cx="542.5" cy="232.2" r="6.3" fill="#000"/>
<circle cx="356.2" cy="303.0" r="6.3" fill="#000"/>
<circle cx="356.2" cy="267.5" r="20.2" fill="#000"/>
<circle cx="418.3" cy="267.5" r="20.2" fill="#000"/>
<circle cx="480.5" cy="267.5" r="20.2" fill="#000"/>
<circle cx="542.6" cy="267.5" r="20.2" fill="#000"/>
<circle cx="223.0" cy="267.5" r="8.0" fill="#000"/>
<circle cx="210.3" cy="254.7" r="1.7" fill="#000"/>
<circle cx="235.8" cy="254.7" r="1.7" fill="#000"/>
<circle cx="210.3" cy="280.5" r="1.7" fill="#000"/>
<circle cx="235.8" cy="280.5" r="1.7" fill="#000"/>
<circle cx="223.0" cy="352.0" r="8.0" fill="#000"/>
<circle cx="258.3" cy="352.0" r="8.0" fill="#000"/>
<circle cx="293.8" cy="352.0" r="8.0" fill="#000"/>
<circle cx="347.2" cy="352.0" r="4.4" fill="#000"/>
<circle cx="409.6" cy="352.0" r="4.4" fill="#000"/>
<circle cx="427.4" cy="352.0" r="4.4" fill="#000"/>
<circle cx="445.0" cy="352.0" r="4.4" fill="#000"/>
<circle cx="471.4" cy="352.0" r="4.4" fill="#000"/>
<circle cx="498.0" cy="352.0" r="4.4" fill="#000"/>
<circle cx="542.5" cy="352.0" r="6.8" fill="#000"/>
<rect x="205.4" y="250.2" width="35.2" height="34.8" fill="none" stroke="#3a4a4a" stroke-width="0.95"/>
<path d="M338.2 267.5L374.2 267.5" stroke="#2a6a90" stroke-width="0.8" stroke-opacity="0.62" fill="none"/>
<path d="M356.2 267.5L356.2 287.5" stroke="#2a6a90" stroke-width="0.8" stroke-opacity="0.62" fill="none"/>
<path d="M400.3 267.5L436.3 267.5" stroke="#2a6a90" stroke-width="0.8" stroke-opacity="0.62" fill="none"/>
<path d="M418.3 267.5L418.3 287.5" stroke="#2a6a90" stroke-width="0.8" stroke-opacity="0.62" fill="none"/>
<path d="M462.5 267.5L498.5 267.5" stroke="#2a6a90" stroke-width="0.8" stroke-opacity="0.62" fill="none"/>
<path d="M480.5 267.5L480.5 287.5" stroke="#2a6a90" stroke-width="0.8" stroke-opacity="0.62" fill="none"/>
<path d="M524.6 267.5L560.6 267.5" stroke="#2a6a90" stroke-width="0.8" stroke-opacity="0.62" fill="none"/>
<path d="M542.6 267.5L542.6 287.5" stroke="#2a6a90" stroke-width="0.8" stroke-opacity="0.62" fill="none"/>
<path d="M536.8 232.2L548.2 232.2" stroke="#2a6a90" stroke-width="0.5" stroke-opacity="0.62" fill="none"/>
<path d="M350.4 232.2L362.0 232.2" stroke="#2a6a90" stroke-width="0.5" stroke-opacity="0.62" fill="none"/>
<path d="M217.0 267.5L229.0 267.5" stroke="#2a6a90" stroke-width="0.45" stroke-opacity="0.62" fill="none"/>
<path d="M223.0 260.5L223.0 267.5" stroke="#2a6a90" stroke-width="0.45" stroke-opacity="0.62" fill="none"/>
<path d="M169.9 101.7L169.9 142.0" stroke="#3d7a98" stroke-width="0.8" stroke-opacity="0.62" fill="none"/>
<path d="M595.9 101.7L595.9 142.0" stroke="#3d7a98" stroke-width="0.8" stroke-opacity="0.62" fill="none"/>
<path d="M351.5 101.7L351.5 175.6" stroke="#3d7a98" stroke-width="0.8" stroke-opacity="0.62" fill="none"/>
<path d="M413.8 101.7L413.8 175.6" stroke="#3d7a98" stroke-width="0.8" stroke-opacity="0.62" fill="none"/>
<path d="M195.3 128.0L195.3 175.6" stroke="#3d7a98" stroke-width="0.8" stroke-opacity="0.62" fill="none"/>
<path d="M257.5 128.0L257.5 175.6" stroke="#3d7a98" stroke-width="0.8" stroke-opacity="0.62" fill="none"/>
<path d="M273.3 116.0L273.3 175.6" stroke="#3d7a98" stroke-width="0.8" stroke-opacity="0.62" fill="none"/>
<path d="M335.8 128.0L335.8 175.6" stroke="#3d7a98" stroke-width="0.8" stroke-opacity="0.62" fill="none"/>
<path d="M492.1 116.0L492.1 175.6" stroke="#3d7a98" stroke-width="0.8" stroke-opacity="0.62" fill="none"/>
<path d="M570.4 128.0L570.4 175.6" stroke="#3d7a98" stroke-width="0.8" stroke-opacity="0.62" fill="none"/>
<path d="M429.8 146.0L429.8 175.6" stroke="#3d7a98" stroke-width="0.8" stroke-opacity="0.62" fill="none"/>
<path d="M508.0 146.0L508.0 204.2" stroke="#3d7a98" stroke-width="0.8" stroke-opacity="0.62" fill="none"/>
<path d="M169.9 107.8L250.0 107.8" stroke="#3d7a98" stroke-width="0.8" stroke-opacity="0.62" fill="none"/>
<path d="M271.0 107.8L351.5 107.8" stroke="#3d7a98" stroke-width="0.8" stroke-opacity="0.62" fill="none"/>
<path d="M169.9 107.8L176.1 106.8L176.1 108.8Z" fill="#1c5266"/>
<path d="M351.5 107.8L345.3 108.8L345.3 106.8Z" fill="#1c5266"/>
<text x="260.5" y="110.1" font-size="6.6" text-anchor="middle" fill="#2e2e86" stroke="#2e2e86" stroke-width="0.2" textLength="18.2" lengthAdjust="spacingAndGlyphs">10.25 "</text>
<path d="M413.8 107.8L494.5 107.8" stroke="#3d7a98" stroke-width="0.8" stroke-opacity="0.62" fill="none"/>
<path d="M515.5 107.8L595.9 107.8" stroke="#3d7a98" stroke-width="0.8" stroke-opacity="0.62" fill="none"/>
<path d="M413.8 107.8L420.0 106.8L420.0 108.8Z" fill="#1c5266"/>
<path d="M595.9 107.8L589.7 108.8L589.7 106.8Z" fill="#1c5266"/>
<text x="505.0" y="110.1" font-size="6.6" text-anchor="middle" fill="#2e2e86" stroke="#2e2e86" stroke-width="0.2" textLength="18.2" lengthAdjust="spacingAndGlyphs">10.25 "</text>
<path d="M169.9 122.8L212.0 122.8" stroke="#3d7a98" stroke-width="0.8" stroke-opacity="0.62" fill="none"/>
<path d="M230.0 122.8L273.3 122.8" stroke="#3d7a98" stroke-width="0.8" stroke-opacity="0.62" fill="none"/>
<path d="M169.9 122.8L176.1 121.8L176.1 123.8Z" fill="#1c5266"/>
<path d="M273.3 122.8L267.1 123.8L267.1 121.8Z" fill="#1c5266"/>
<text x="221.0" y="125.1" font-size="6.6" text-anchor="middle" fill="#2e2e86" stroke="#2e2e86" stroke-width="0.2" textLength="15.0" lengthAdjust="spacingAndGlyphs">5.95 "</text>
<path d="M492.1 122.8L534.5 122.8" stroke="#3d7a98" stroke-width="0.8" stroke-opacity="0.62" fill="none"/>
<path d="M552.5 122.8L595.9 122.8" stroke="#3d7a98" stroke-width="0.8" stroke-opacity="0.62" fill="none"/>
<path d="M492.1 122.8L498.3 121.8L498.3 123.8Z" fill="#1c5266"/>
<path d="M595.9 122.8L589.7 123.8L589.7 121.8Z" fill="#1c5266"/>
<text x="543.5" y="125.1" font-size="6.6" text-anchor="middle" fill="#2e2e86" stroke="#2e2e86" stroke-width="0.2" textLength="15.0" lengthAdjust="spacingAndGlyphs">5.85 "</text>
<path d="M156.0 134.7L169.9 134.7" stroke="#3d7a98" stroke-width="0.8" stroke-opacity="0.62" fill="none"/>
<path d="M169.9 134.7L163.7 135.7L163.7 133.7Z" fill="#1c5266"/>
<path d="M195.3 134.7L201.5 133.7L201.5 135.7Z" fill="#1c5266"/>
<text x="182.5" y="136.5" font-size="6.6" text-anchor="middle" fill="#2e2e86" stroke="#2e2e86" stroke-width="0.2" textLength="15.0" lengthAdjust="spacingAndGlyphs">1.45 "</text>
<path d="M195.3 134.7L218.5 134.7" stroke="#3d7a98" stroke-width="0.8" stroke-opacity="0.62" fill="none"/>
<path d="M234.5 134.7L257.5 134.7" stroke="#3d7a98" stroke-width="0.8" stroke-opacity="0.62" fill="none"/>
<path d="M195.3 134.7L201.5 133.7L201.5 135.7Z" fill="#1c5266"/>
<path d="M257.5 134.7L251.3 135.7L251.3 133.7Z" fill="#1c5266"/>
<text x="226.5" y="137.0" font-size="6.6" text-anchor="middle" fill="#2e2e86" stroke="#2e2e86" stroke-width="0.2" textLength="11.7" lengthAdjust="spacingAndGlyphs">3.5 "</text>
<path d="M273.3 134.7L295.5 134.7" stroke="#3d7a98" stroke-width="0.8" stroke-opacity="0.62" fill="none"/>
<path d="M311.5 134.7L335.8 134.7" stroke="#3d7a98" stroke-width="0.8" stroke-opacity="0.62" fill="none"/>
<path d="M273.3 134.7L279.5 133.7L279.5 135.7Z" fill="#1c5266"/>
<path d="M335.8 134.7L329.6 135.7L329.6 133.7Z" fill="#1c5266"/>
<text x="303.5" y="137.0" font-size="6.6" text-anchor="middle" fill="#2e2e86" stroke="#2e2e86" stroke-width="0.2" textLength="11.7" lengthAdjust="spacingAndGlyphs">3.5 "</text>
<path d="M351.5 134.7L374.5 134.7" stroke="#3d7a98" stroke-width="0.8" stroke-opacity="0.62" fill="none"/>
<path d="M390.5 134.7L413.8 134.7" stroke="#3d7a98" stroke-width="0.8" stroke-opacity="0.62" fill="none"/>
<path d="M351.5 134.7L357.7 133.7L357.7 135.7Z" fill="#1c5266"/>
<path d="M413.8 134.7L407.6 135.7L407.6 133.7Z" fill="#1c5266"/>
<text x="382.5" y="137.0" font-size="6.6" text-anchor="middle" fill="#2e2e86" stroke="#2e2e86" stroke-width="0.2" textLength="11.7" lengthAdjust="spacingAndGlyphs">3.5 "</text>
<path d="M557.0 134.7L570.4 134.7" stroke="#3d7a98" stroke-width="0.8" stroke-opacity="0.62" fill="none"/>
<path d="M570.4 134.7L564.2 135.7L564.2 133.7Z" fill="#1c5266"/>
<path d="M595.9 134.7L602.1 133.7L602.1 135.7Z" fill="#1c5266"/>
<path d="M595.9 134.7L609.0 134.7" stroke="#3d7a98" stroke-width="0.8" stroke-opacity="0.62" fill="none"/>
<text x="583.0" y="136.5" font-size="6.6" text-anchor="middle" fill="#2e2e86" stroke="#2e2e86" stroke-width="0.2" textLength="15.0" lengthAdjust="spacingAndGlyphs">1.45 "</text>
<path d="M226.5 147.0L226.5 158.0" stroke="#3d7a98" stroke-width="0.8" stroke-opacity="0.62" fill="none"/>
<path d="M195.3 151.3L204.0 151.3" stroke="#3d7a98" stroke-width="0.8" stroke-opacity="0.62" fill="none"/>
<path d="M219.0 151.3L226.5 151.3" stroke="#3d7a98" stroke-width="0.8" stroke-opacity="0.62" fill="none"/>
<path d="M195.3 151.3L201.5 150.3L201.5 152.3Z" fill="#1c5266"/>
<path d="M226.5 151.3L220.3 152.3L220.3 150.3Z" fill="#1c5266"/>
<text x="211.5" y="153.6" font-size="6.6" text-anchor="middle" fill="#2e2e86" stroke="#2e2e86" stroke-width="0.2" textLength="15.0" lengthAdjust="spacingAndGlyphs">1.75 "</text>
<path d="M461.0 147.0L461.0 158.0" stroke="#3d7a98" stroke-width="0.8" stroke-opacity="0.62" fill="none"/>
<path d="M429.8 152.3L437.8 152.3" stroke="#3d7a98" stroke-width="0.8" stroke-opacity="0.62" fill="none"/>
<path d="M452.8 152.3L461.0 152.3" stroke="#3d7a98" stroke-width="0.8" stroke-opacity="0.62" fill="none"/>
<path d="M429.8 152.3L436.0 151.3L436.0 153.3Z" fill="#1c5266"/>
<path d="M461.0 152.3L454.8 153.3L454.8 151.3Z" fill="#1c5266"/>
<text x="445.3" y="154.6" font-size="6.6" text-anchor="middle" fill="#2e2e86" stroke="#2e2e86" stroke-width="0.2" textLength="15.0" lengthAdjust="spacingAndGlyphs">1.75 "</text>
<path d="M257.5 160.3L277.0 160.3" stroke="#3d7a98" stroke-width="0.8" stroke-opacity="0.62" fill="none"/>
<path d="M257.5 160.3L263.7 159.3L263.7 161.3Z" fill="#1c5266"/>
<path d="M273.3 160.3L267.1 161.3L267.1 159.3Z" fill="#1c5266"/>
<text x="278.5" y="162.6" font-size="6.6" text-anchor="start" fill="#2e2e86" stroke="#2e2e86" stroke-width="0.2" textLength="11.7" lengthAdjust="spacingAndGlyphs">0.9 "</text>
<path d="M335.8 161.7L355.0 161.7" stroke="#3d7a98" stroke-width="0.8" stroke-opacity="0.62" fill="none"/>
<path d="M335.8 161.7L342.0 160.7L342.0 162.7Z" fill="#1c5266"/>
<path d="M351.5 161.7L345.3 162.7L345.3 160.7Z" fill="#1c5266"/>
<text x="356.5" y="164.0" font-size="6.6" text-anchor="start" fill="#2e2e86" stroke="#2e2e86" stroke-width="0.2" textLength="11.7" lengthAdjust="spacingAndGlyphs">0.9 "</text>
<path d="M492.1 151.7L511.0 151.7" stroke="#3d7a98" stroke-width="0.8" stroke-opacity="0.62" fill="none"/>
<path d="M492.1 151.7L498.3 150.7L498.3 152.7Z" fill="#1c5266"/>
<path d="M508.0 151.7L501.8 152.7L501.8 150.7Z" fill="#1c5266"/>
<text x="512.5" y="154.0" font-size="6.6" text-anchor="start" fill="#2e2e86" stroke="#2e2e86" stroke-width="0.2" textLength="11.7" lengthAdjust="spacingAndGlyphs">0.9 "</text>
<path d="M508.0 161.7L531.0 161.7" stroke="#3d7a98" stroke-width="0.8" stroke-opacity="0.62" fill="none"/>
<path d="M547.0 161.7L570.4 161.7" stroke="#3d7a98" stroke-width="0.8" stroke-opacity="0.62" fill="none"/>
<path d="M508.0 161.7L514.2 160.7L514.2 162.7Z" fill="#1c5266"/>
<path d="M570.4 161.7L564.2 162.7L564.2 160.7Z" fill="#1c5266"/>
<text x="539.0" y="164.0" font-size="6.6" text-anchor="middle" fill="#2e2e86" stroke="#2e2e86" stroke-width="0.2" textLength="11.7" lengthAdjust="spacingAndGlyphs">3.5 "</text>
<path d="M230.2 158.6L238.3 148.7L245.0 148.7" stroke="#3d7a98" stroke-width="0.8" stroke-opacity="0.62" fill="none"/>
<path d="M230.2 158.6L232.6 154.1L234.2 155.4Z" fill="#1c5266"/>
<text x="246.7" y="151.0" font-size="6.6" text-anchor="start" fill="#2e2e86" stroke="#2e2e86" stroke-width="0.2" textLength="19.5" lengthAdjust="spacingAndGlyphs">Ø0.68 "</text>
<path d="M310.0 158.2L318.3 149.7L325.0 149.7" stroke="#3d7a98" stroke-width="0.8" stroke-opacity="0.62" fill="none"/>
<path d="M310.0 158.2L312.8 154.0L314.2 155.4Z" fill="#1c5266"/>
<text x="326.7" y="152.0" font-size="6.6" text-anchor="start" fill="#2e2e86" stroke="#2e2e86" stroke-width="0.2" textLength="19.5" lengthAdjust="spacingAndGlyphs">Ø0.68 "</text>
<path d="M434 168.6 Q446 169 455 165.6" stroke="#3d7a98" stroke-width="0.8" stroke-opacity="0.62" fill="none"/>
<path d="M455.0 165.6L450.6 168.1L449.9 166.2Z" fill="#1c5266"/>
<text x="414.0" y="170.1" font-size="6.6" text-anchor="start" fill="#2e2e86" stroke="#2e2e86" stroke-width="0.2" textLength="19.5" lengthAdjust="spacingAndGlyphs">Ø0.68 "</text>
<path d="M112.5 143.7L167.5 143.7" stroke="#3d7a98" stroke-width="0.8" stroke-opacity="0.62" fill="none"/>
<path d="M150.8 175.4L195.3 175.4" stroke="#3d7a98" stroke-width="0.8" stroke-opacity="0.62" fill="none"/>
<path d="M150.8 203.9L195.3 203.9" stroke="#3d7a98" stroke-width="0.8" stroke-opacity="0.62" fill="none"/>
<path d="M157.7 143.7L157.7 155.5" stroke="#3d7a98" stroke-width="0.8" stroke-opacity="0.62" fill="none"/>
<path d="M157.7 163.5L157.7 175.4" stroke="#3d7a98" stroke-width="0.8" stroke-opacity="0.62" fill="none"/>
<path d="M157.7 143.7L158.7 149.9L156.7 149.9Z" fill="#1c5266"/>
<path d="M157.7 175.4L156.7 169.2L158.7 169.2Z" fill="#1c5266"/>
<text x="157.7" y="161.8" font-size="6.6" text-anchor="middle" fill="#2e2e86" stroke="#2e2e86" stroke-width="0.2" textLength="15.0" lengthAdjust="spacingAndGlyphs">1.79 "</text>
<path d="M157.7 175.4L157.7 185.4" stroke="#3d7a98" stroke-width="0.8" stroke-opacity="0.62" fill="none"/>
<path d="M157.7 193.4L157.7 203.9" stroke="#3d7a98" stroke-width="0.8" stroke-opacity="0.62" fill="none"/>
<path d="M157.7 175.4L158.7 181.6L156.7 181.6Z" fill="#1c5266"/>
<path d="M157.7 203.9L156.7 197.7L158.7 197.7Z" fill="#1c5266"/>
<text x="157.7" y="191.7" font-size="6.6" text-anchor="middle" fill="#2e2e86" stroke="#2e2e86" stroke-width="0.2" textLength="15.0" lengthAdjust="spacingAndGlyphs">1.62 "</text>
<path d="M138.3 143.7L138.3 192.5" stroke="#3d7a98" stroke-width="0.8" stroke-opacity="0.62" fill="none"/>
<path d="M138.3 201.5L138.3 250.3" stroke="#3d7a98" stroke-width="0.8" stroke-opacity="0.62" fill="none"/>
<path d="M138.3 143.7L139.3 149.9L137.3 149.9Z" fill="#1c5266"/>
<path d="M138.3 250.3L137.3 244.1L139.3 244.1Z" fill="#1c5266"/>
<text x="138.3" y="199.3" font-size="6.6" text-anchor="middle" fill="#2e2e86" stroke="#2e2e86" stroke-width="0.2" textLength="6.9" lengthAdjust="spacingAndGlyphs">6 "</text>
<path d="M118.0 143.7L118.0 199.0" stroke="#3d7a98" stroke-width="0.8" stroke-opacity="0.62" fill="none"/>
<path d="M118.0 208.0L118.0 267.5" stroke="#3d7a98" stroke-width="0.8" stroke-opacity="0.62" fill="none"/>
<path d="M118.0 143.7L119.0 149.9L117.0 149.9Z" fill="#1c5266"/>
<path d="M118.0 267.5L117.0 261.3L119.0 261.3Z" fill="#1c5266"/>
<text x="118.0" y="205.8" font-size="6.6" text-anchor="middle" fill="#2e2e86" stroke="#2e2e86" stroke-width="0.2" textLength="6.9" lengthAdjust="spacingAndGlyphs">7 "</text>
<path d="M131.7 250.3L205.4 250.3" stroke="#3d7a98" stroke-width="0.8" stroke-opacity="0.62" fill="none"/>
<path d="M598.0 143.7L655.8 143.7" stroke="#3d7a98" stroke-width="0.8" stroke-opacity="0.62" fill="none"/>
<path d="M631.0 143.7L631.0 183.3" stroke="#3d7a98" stroke-width="0.8" stroke-opacity="0.62" fill="none"/>
<path d="M631.0 192.3L631.0 232.2" stroke="#3d7a98" stroke-width="0.8" stroke-opacity="0.62" fill="none"/>
<path d="M631.0 143.7L632.0 149.9L630.0 149.9Z" fill="#1c5266"/>
<path d="M631.0 232.2L630.0 226.0L632.0 226.0Z" fill="#1c5266"/>
<text x="631.0" y="190.1" font-size="6.6" text-anchor="middle" fill="#2e2e86" stroke="#2e2e86" stroke-width="0.2" textLength="6.9" lengthAdjust="spacingAndGlyphs">5 "</text>
<path d="M649.5 143.7L649.5 200.3" stroke="#3d7a98" stroke-width="0.8" stroke-opacity="0.62" fill="none"/>
<path d="M649.5 209.3L649.5 267.5" stroke="#3d7a98" stroke-width="0.8" stroke-opacity="0.62" fill="none"/>
<path d="M649.5 143.7L650.5 149.9L648.5 149.9Z" fill="#1c5266"/>
<path d="M649.5 267.5L648.5 261.3L650.5 261.3Z" fill="#1c5266"/>
<text x="649.5" y="207.1" font-size="6.6" text-anchor="middle" fill="#2e2e86" stroke="#2e2e86" stroke-width="0.2" textLength="6.9" lengthAdjust="spacingAndGlyphs">7 "</text>
<path d="M171.2 216.2L230.2 216.2" stroke="#3d7a98" stroke-width="0.8" stroke-opacity="0.62" fill="none"/>
<path d="M248.2 216.2L305.3 216.2" stroke="#3d7a98" stroke-width="0.8" stroke-opacity="0.62" fill="none"/>
<path d="M171.2 216.2L177.4 215.2L177.4 217.2Z" fill="#1c5266"/>
<path d="M305.3 216.2L299.1 217.2L299.1 215.2Z" fill="#1c5266"/>
<text x="239.2" y="218.5" font-size="6.6" text-anchor="middle" fill="#2e2e86" stroke="#2e2e86" stroke-width="0.2" textLength="15.0" lengthAdjust="spacingAndGlyphs">7.65 "</text>
<path d="M305.3 207.0L305.3 229.7" stroke="#3d7a98" stroke-width="0.8" stroke-opacity="0.62" fill="none"/>
<path d="M356.2 213.5L466.8 213.5" stroke="#3d7a98" stroke-width="0.8" stroke-opacity="0.62" fill="none"/>
<path d="M484.8 213.5L594.3 213.5" stroke="#3d7a98" stroke-width="0.8" stroke-opacity="0.62" fill="none"/>
<path d="M356.2 213.5L362.4 212.5L362.4 214.5Z" fill="#1c5266"/>
<path d="M594.3 213.5L588.1 214.5L588.1 212.5Z" fill="#1c5266"/>
<text x="475.8" y="215.8" font-size="6.6" text-anchor="middle" fill="#2e2e86" stroke="#2e2e86" stroke-width="0.2" textLength="15.0" lengthAdjust="spacingAndGlyphs">13.5 "</text>
<path d="M356.2 207.0L356.2 232.2" stroke="#3d7a98" stroke-width="0.8" stroke-opacity="0.62" fill="none"/>
<path d="M171.2 235.8L190.3 235.8" stroke="#3d7a98" stroke-width="0.8" stroke-opacity="0.62" fill="none"/>
<path d="M201.3 235.8L223.2 235.8" stroke="#3d7a98" stroke-width="0.8" stroke-opacity="0.62" fill="none"/>
<path d="M171.2 235.8L177.4 234.8L177.4 236.8Z" fill="#1c5266"/>
<path d="M223.2 235.8L217.0 236.8L217.0 234.8Z" fill="#1c5266"/>
<text x="195.8" y="238.1" font-size="6.6" text-anchor="middle" fill="#2e2e86" stroke="#2e2e86" stroke-width="0.2" textLength="6.9" lengthAdjust="spacingAndGlyphs">3 "</text>
<path d="M223.2 229.2L223.2 267.5" stroke="#3d7a98" stroke-width="0.8" stroke-opacity="0.62" fill="none"/>
<text x="175.8" y="243.8" font-size="6.6" text-anchor="start" fill="#2e2e86" stroke="#2e2e86" stroke-width="0.2" textLength="19.5" lengthAdjust="spacingAndGlyphs">Ø0.14 "</text>
<path d="M198.3 241.5L204.2 241.5L209.5 253.5" stroke="#3d7a98" stroke-width="0.8" stroke-opacity="0.62" fill="none"/>
<path d="M209.7 253.8L206.8 249.6L208.6 248.8Z" fill="#1c5266"/>
<path d="M225.4 258.8L235.0 225.3L242.0 225.3" stroke="#3d7a98" stroke-width="0.8" stroke-opacity="0.62" fill="none"/>
<path d="M225.3 259.4L225.8 254.1L227.7 254.7Z" fill="#1c5266"/>
<text x="245.0" y="227.6" font-size="6.6" text-anchor="start" fill="#2e2e86" stroke="#2e2e86" stroke-width="0.2" textLength="19.5" lengthAdjust="spacingAndGlyphs">Ø0.87 "</text>
<text x="239.2" y="238.6" font-size="6.6" text-anchor="start" fill="#2e2e86" stroke="#2e2e86" stroke-width="0.2" textLength="11.7" lengthAdjust="spacingAndGlyphs">1.4 "</text>
<path d="M250.5 236.5L253.0 236.5L253.0 280.5" stroke="#3d7a98" stroke-width="0.8" stroke-opacity="0.62" fill="none"/>
<path d="M253.0 254.7L254.0 260.9L252.0 260.9Z" fill="#1c5266"/>
<path d="M253.0 280.5L252.0 274.3L254.0 274.3Z" fill="#1c5266"/>
<path d="M235.8 254.7L260.0 254.7" stroke="#3d7a98" stroke-width="0.8" stroke-opacity="0.62" fill="none"/>
<path d="M235.8 280.5L260.0 280.5" stroke="#3d7a98" stroke-width="0.8" stroke-opacity="0.62" fill="none"/>
<path d="M210.3 280.5L210.3 301.7" stroke="#3d7a98" stroke-width="0.8" stroke-opacity="0.62" fill="none"/>
<path d="M235.8 280.5L235.8 301.7" stroke="#3d7a98" stroke-width="0.8" stroke-opacity="0.62" fill="none"/>
<path d="M197.5 294.5L210.3 294.5" stroke="#3d7a98" stroke-width="0.8" stroke-opacity="0.62" fill="none"/>
<path d="M210.3 294.5L204.1 295.5L204.1 293.5Z" fill="#1c5266"/>
<path d="M235.8 294.5L247.5 294.5" stroke="#3d7a98" stroke-width="0.8" stroke-opacity="0.62" fill="none"/>
<path d="M235.8 294.5L242.0 293.5L242.0 295.5Z" fill="#1c5266"/>
<text x="223.0" y="296.5" font-size="6.6" text-anchor="middle" fill="#2e2e86" stroke="#2e2e86" stroke-width="0.2" textLength="11.7" lengthAdjust="spacingAndGlyphs">1.4 "</text>
<path d="M273.0 254.5L273.0 285.8" stroke="#3d7a98" stroke-width="0.8" stroke-opacity="0.62" fill="none"/>
<path d="M273.0 267.5L272.0 261.3L274.0 261.3Z" fill="#1c5266"/>
<path d="M273.0 273.0L274.0 279.2L272.0 279.2Z" fill="#1c5266"/>
<text x="275.8" y="257.0" font-size="6.6" text-anchor="start" fill="#2e2e86" stroke="#2e2e86" stroke-width="0.2" textLength="11.7" lengthAdjust="spacingAndGlyphs">0.3 "</text>
<path d="M266.2 273.0L281.7 273.0" stroke="#3d7a98" stroke-width="0.8" stroke-opacity="0.62" fill="none"/>
<path d="M281.7 289.7L281.7 307.5" stroke="#3d7a98" stroke-width="0.8" stroke-opacity="0.62" fill="none"/>
<path d="M306.7 289.7L306.7 307.5" stroke="#3d7a98" stroke-width="0.8" stroke-opacity="0.62" fill="none"/>
<path d="M268.3 300.0L281.7 300.0" stroke="#3d7a98" stroke-width="0.8" stroke-opacity="0.62" fill="none"/>
<path d="M281.7 300.0L275.5 301.0L275.5 299.0Z" fill="#1c5266"/>
<path d="M306.7 300.0L314.0 300.0" stroke="#3d7a98" stroke-width="0.8" stroke-opacity="0.62" fill="none"/>
<path d="M306.7 300.0L312.9 299.0L312.9 301.0Z" fill="#1c5266"/>
<text x="294.2" y="302.3" font-size="6.6" text-anchor="middle" fill="#2e2e86" stroke="#2e2e86" stroke-width="0.2" textLength="11.7" lengthAdjust="spacingAndGlyphs">1.4 "</text>
<path d="M306.7 273.0L325.8 273.0" stroke="#3d7a98" stroke-width="0.8" stroke-opacity="0.62" fill="none"/>
<path d="M306.7 289.7L325.0 289.7" stroke="#3d7a98" stroke-width="0.8" stroke-opacity="0.62" fill="none"/>
<path d="M319.7 273.0L319.7 295.8L321.0 295.8" stroke="#3d7a98" stroke-width="0.8" stroke-opacity="0.62" fill="none"/>
<path d="M319.7 273.0L320.7 279.2L318.7 279.2Z" fill="#1c5266"/>
<path d="M319.7 289.7L318.7 283.5L320.7 283.5Z" fill="#1c5266"/>
<text x="321.7" y="297.8" font-size="6.6" text-anchor="start" fill="#2e2e86" stroke="#2e2e86" stroke-width="0.2" textLength="11.7" lengthAdjust="spacingAndGlyphs">0.9 "</text>
<path d="M310.0 229.7L327.5 229.7" stroke="#3d7a98" stroke-width="0.8" stroke-opacity="0.62" fill="none"/>
<path d="M320.8 229.7L320.8 240.8" stroke="#3d7a98" stroke-width="0.8" stroke-opacity="0.62" fill="none"/>
<path d="M320.8 249.8L320.8 267.5" stroke="#3d7a98" stroke-width="0.8" stroke-opacity="0.62" fill="none"/>
<path d="M320.8 229.7L321.8 235.9L319.8 235.9Z" fill="#1c5266"/>
<path d="M320.8 267.5L319.8 261.3L321.8 261.3Z" fill="#1c5266"/>
<text x="320.8" y="247.6" font-size="6.6" text-anchor="middle" fill="#2e2e86" stroke="#2e2e86" stroke-width="0.2" textLength="15.0" lengthAdjust="spacingAndGlyphs">2.14 "</text>
<path d="M309.4 226.2L317.5 217.0L326.0 217.0" stroke="#3d7a98" stroke-width="0.8" stroke-opacity="0.62" fill="none"/>
<path d="M309.2 226.4L311.7 222.0L313.2 223.3Z" fill="#1c5266"/>
<text x="329.2" y="219.3" font-size="6.6" text-anchor="start" fill="#2e2e86" stroke="#2e2e86" stroke-width="0.2" textLength="19.5" lengthAdjust="spacingAndGlyphs">Ø0.47 "</text>
<path d="M361.5 237.2L371.7 244.2L378.0 244.2" stroke="#3d7a98" stroke-width="0.8" stroke-opacity="0.62" fill="none"/>
<path d="M361.2 237.0L365.9 239.0L364.7 240.7Z" fill="#1c5266"/>
<text x="380.0" y="246.5" font-size="6.6" text-anchor="start" fill="#2e2e86" stroke="#2e2e86" stroke-width="0.2" textLength="19.5" lengthAdjust="spacingAndGlyphs">Ø0.68 "</text>
<text x="498.3" y="247.8" font-size="6.6" text-anchor="start" fill="#2e2e86" stroke="#2e2e86" stroke-width="0.2" textLength="19.5" lengthAdjust="spacingAndGlyphs">Ø0.68 "</text>
<path d="M520.0 245.5L527.5 245.5L537.0 237.6" stroke="#3d7a98" stroke-width="0.8" stroke-opacity="0.62" fill="none"/>
<path d="M537.2 237.4L534.0 241.4L532.7 239.8Z" fill="#1c5266"/>
<path d="M542.5 216.7L542.5 232.2" stroke="#3d7a98" stroke-width="0.8" stroke-opacity="0.62" fill="none"/>
<path d="M542.5 224.2L562.3 224.2" stroke="#3d7a98" stroke-width="0.8" stroke-opacity="0.62" fill="none"/>
<path d="M574.3 224.2L594.3 224.2" stroke="#3d7a98" stroke-width="0.8" stroke-opacity="0.62" fill="none"/>
<path d="M542.5 224.2L548.7 223.2L548.7 225.2Z" fill="#1c5266"/>
<path d="M594.3 224.2L588.1 225.2L588.1 223.2Z" fill="#1c5266"/>
<text x="568.3" y="226.5" font-size="6.6" text-anchor="middle" fill="#2e2e86" stroke="#2e2e86" stroke-width="0.2" textLength="6.9" lengthAdjust="spacingAndGlyphs">3 "</text>
<text x="569.2" y="241.8" font-size="6.6" text-anchor="start" fill="#2e2e86" stroke="#2e2e86" stroke-width="0.2" textLength="19.5" lengthAdjust="spacingAndGlyphs">Ø2.25 "</text>
<path d="M567.5 239.5L560.0 239.5L553.6 248.8" stroke="#3d7a98" stroke-width="0.8" stroke-opacity="0.62" fill="none"/>
<path d="M553.3 249.3L555.3 244.6L556.9 245.7Z" fill="#1c5266"/>
<path d="M356.2 287.5L356.2 310.0" stroke="#3d7a98" stroke-width="0.8" stroke-opacity="0.62" fill="none"/>
<path d="M418.3 287.5L418.3 310.0" stroke="#3d7a98" stroke-width="0.8" stroke-opacity="0.62" fill="none"/>
<path d="M480.5 287.5L480.5 310.0" stroke="#3d7a98" stroke-width="0.8" stroke-opacity="0.62" fill="none"/>
<path d="M542.6 287.5L542.6 310.0" stroke="#3d7a98" stroke-width="0.8" stroke-opacity="0.62" fill="none"/>
<path d="M356.2 303.0L379.2 303.0" stroke="#3d7a98" stroke-width="0.8" stroke-opacity="0.62" fill="none"/>
<path d="M395.2 303.0L418.3 303.0" stroke="#3d7a98" stroke-width="0.8" stroke-opacity="0.62" fill="none"/>
<path d="M356.2 303.0L362.4 302.0L362.4 304.0Z" fill="#1c5266"/>
<path d="M418.3 303.0L412.1 304.0L412.1 302.0Z" fill="#1c5266"/>
<text x="387.2" y="305.3" font-size="6.6" text-anchor="middle" fill="#2e2e86" stroke="#2e2e86" stroke-width="0.2" textLength="11.7" lengthAdjust="spacingAndGlyphs">3.5 "</text>
<path d="M418.3 303.0L441.2 303.0" stroke="#3d7a98" stroke-width="0.8" stroke-opacity="0.62" fill="none"/>
<path d="M457.2 303.0L480.5 303.0" stroke="#3d7a98" stroke-width="0.8" stroke-opacity="0.62" fill="none"/>
<path d="M418.3 303.0L424.5 302.0L424.5 304.0Z" fill="#1c5266"/>
<path d="M480.5 303.0L474.3 304.0L474.3 302.0Z" fill="#1c5266"/>
<text x="449.2" y="305.3" font-size="6.6" text-anchor="middle" fill="#2e2e86" stroke="#2e2e86" stroke-width="0.2" textLength="11.7" lengthAdjust="spacingAndGlyphs">3.5 "</text>
<path d="M480.5 303.0L502.2 303.0" stroke="#3d7a98" stroke-width="0.8" stroke-opacity="0.62" fill="none"/>
<path d="M521.2 303.0L542.6 303.0" stroke="#3d7a98" stroke-width="0.8" stroke-opacity="0.62" fill="none"/>
<path d="M480.5 303.0L486.7 302.0L486.7 304.0Z" fill="#1c5266"/>
<path d="M542.6 303.0L536.4 304.0L536.4 302.0Z" fill="#1c5266"/>
<text x="511.7" y="305.3" font-size="6.6" text-anchor="middle" fill="#2e2e86" stroke="#2e2e86" stroke-width="0.2" textLength="15.0" lengthAdjust="spacingAndGlyphs">3.48 "</text>
<path d="M542.6 303.0L563.2 303.0" stroke="#3d7a98" stroke-width="0.8" stroke-opacity="0.62" fill="none"/>
<path d="M575.2 303.0L594.3 303.0" stroke="#3d7a98" stroke-width="0.8" stroke-opacity="0.62" fill="none"/>
<path d="M542.6 303.0L548.8 302.0L548.8 304.0Z" fill="#1c5266"/>
<path d="M594.3 303.0L588.1 304.0L588.1 302.0Z" fill="#1c5266"/>
<text x="569.2" y="305.3" font-size="6.6" text-anchor="middle" fill="#2e2e86" stroke="#2e2e86" stroke-width="0.2" textLength="6.9" lengthAdjust="spacingAndGlyphs">3 "</text>
<path d="M360.6 309.5L367.5 323.0L374.2 323.0" stroke="#3d7a98" stroke-width="0.8" stroke-opacity="0.62" fill="none"/>
<path d="M360.4 309.2L363.6 313.2L361.8 314.1Z" fill="#1c5266"/>
<text x="376.7" y="325.3" font-size="6.6" text-anchor="start" fill="#2e2e86" stroke="#2e2e86" stroke-width="0.2" textLength="19.5" lengthAdjust="spacingAndGlyphs">Ø0.68 "</text>
<path d="M498.0 309.2L498.0 348.0" stroke="#3d7a98" stroke-width="0.8" stroke-opacity="0.62" fill="none"/>
<path d="M498.0 316.3L539.2 316.3" stroke="#3d7a98" stroke-width="0.8" stroke-opacity="0.62" fill="none"/>
<path d="M555.2 316.3L594.3 316.3" stroke="#3d7a98" stroke-width="0.8" stroke-opacity="0.62" fill="none"/>
<path d="M498.0 316.3L504.2 315.3L504.2 317.3Z" fill="#1c5266"/>
<path d="M594.3 316.3L588.1 317.3L588.1 315.3Z" fill="#1c5266"/>
<text x="547.2" y="318.6" font-size="6.6" text-anchor="middle" fill="#2e2e86" stroke="#2e2e86" stroke-width="0.2" textLength="11.7" lengthAdjust="spacingAndGlyphs">5.5 "</text>
<path d="M409.7 323.0L409.7 348.0" stroke="#3d7a98" stroke-width="0.8" stroke-opacity="0.62" fill="none"/>
<path d="M427.5 335.8L427.5 348.0" stroke="#3d7a98" stroke-width="0.8" stroke-opacity="0.62" fill="none"/>
<path d="M445.0 323.0L445.0 348.0" stroke="#3d7a98" stroke-width="0.8" stroke-opacity="0.62" fill="none"/>
<path d="M471.3 323.0L471.3 348.0" stroke="#3d7a98" stroke-width="0.8" stroke-opacity="0.62" fill="none"/>
<path d="M409.7 330.0L421.5 330.0" stroke="#3d7a98" stroke-width="0.8" stroke-opacity="0.62" fill="none"/>
<path d="M432.5 330.0L445.0 330.0" stroke="#3d7a98" stroke-width="0.8" stroke-opacity="0.62" fill="none"/>
<path d="M409.7 330.0L415.9 329.0L415.9 331.0Z" fill="#1c5266"/>
<path d="M445.0 330.0L438.8 331.0L438.8 329.0Z" fill="#1c5266"/>
<text x="427.0" y="332.3" font-size="6.6" text-anchor="middle" fill="#2e2e86" stroke="#2e2e86" stroke-width="0.2" textLength="6.9" lengthAdjust="spacingAndGlyphs">2 "</text>
<path d="M396.3 342.8L409.7 342.8" stroke="#3d7a98" stroke-width="0.8" stroke-opacity="0.62" fill="none"/>
<path d="M409.7 342.8L403.5 343.8L403.5 341.8Z" fill="#1c5266"/>
<path d="M427.5 342.8L439.7 342.8" stroke="#3d7a98" stroke-width="0.8" stroke-opacity="0.62" fill="none"/>
<path d="M427.5 342.8L433.7 341.8L433.7 343.8Z" fill="#1c5266"/>
<text x="418.3" y="344.9" font-size="6.6" text-anchor="middle" fill="#2e2e86" stroke="#2e2e86" stroke-width="0.2" textLength="6.9" lengthAdjust="spacingAndGlyphs">1 "</text>
<path d="M432.5 338.0L445.0 338.0" stroke="#3d7a98" stroke-width="0.8" stroke-opacity="0.62" fill="none"/>
<path d="M445.0 338.0L438.8 339.0L438.8 337.0Z" fill="#1c5266"/>
<path d="M471.3 338.0L484.0 338.0" stroke="#3d7a98" stroke-width="0.8" stroke-opacity="0.62" fill="none"/>
<path d="M471.3 338.0L477.5 337.0L477.5 339.0Z" fill="#1c5266"/>
<text x="458.2" y="339.9" font-size="6.6" text-anchor="middle" fill="#2e2e86" stroke="#2e2e86" stroke-width="0.2" textLength="11.7" lengthAdjust="spacingAndGlyphs">1.5 "</text>
<path d="M458.7 329.5L471.3 329.5" stroke="#3d7a98" stroke-width="0.8" stroke-opacity="0.62" fill="none"/>
<path d="M471.3 329.5L465.1 330.5L465.1 328.5Z" fill="#1c5266"/>
<path d="M498.0 329.5L511.3 329.5" stroke="#3d7a98" stroke-width="0.8" stroke-opacity="0.62" fill="none"/>
<path d="M498.0 329.5L504.2 328.5L504.2 330.5Z" fill="#1c5266"/>
<text x="485.0" y="331.5" font-size="6.6" text-anchor="middle" fill="#2e2e86" stroke="#2e2e86" stroke-width="0.2" textLength="11.7" lengthAdjust="spacingAndGlyphs">1.5 "</text>
<text x="557.5" y="331.0" font-size="6.6" text-anchor="start" fill="#2e2e86" stroke="#2e2e86" stroke-width="0.2" textLength="19.5" lengthAdjust="spacingAndGlyphs">Ø0.76 "</text>
<path d="M555.8 328.7L548.3 328.7L545.1 344.6" stroke="#3d7a98" stroke-width="0.8" stroke-opacity="0.62" fill="none"/>
<path d="M545.0 345.2L545.0 339.9L547.0 340.3Z" fill="#1c5266"/>
<path d="M542.5 351.7L563.2 351.7" stroke="#3d7a98" stroke-width="0.8" stroke-opacity="0.62" fill="none"/>
<path d="M575.2 351.7L594.3 351.7" stroke="#3d7a98" stroke-width="0.8" stroke-opacity="0.62" fill="none"/>
<path d="M542.5 351.7L548.7 350.7L548.7 352.7Z" fill="#1c5266"/>
<path d="M594.3 351.7L588.1 352.7L588.1 350.7Z" fill="#1c5266"/>
<text x="569.2" y="354.0" font-size="6.6" text-anchor="middle" fill="#2e2e86" stroke="#2e2e86" stroke-width="0.2" textLength="6.9" lengthAdjust="spacingAndGlyphs">3 "</text>
<path d="M536.3 357.5L536.3 370.8" stroke="#3d7a98" stroke-width="0.8" stroke-opacity="0.62" fill="none"/>
<path d="M548.3 357.5L548.3 370.8" stroke="#3d7a98" stroke-width="0.8" stroke-opacity="0.62" fill="none"/>
<path d="M523.3 364.2L536.3 364.2" stroke="#3d7a98" stroke-width="0.8" stroke-opacity="0.62" fill="none"/>
<path d="M536.3 364.2L530.1 365.2L530.1 363.2Z" fill="#1c5266"/>
<path d="M548.3 364.2L559.0 364.2" stroke="#3d7a98" stroke-width="0.8" stroke-opacity="0.62" fill="none"/>
<path d="M548.3 364.2L554.5 363.2L554.5 365.2Z" fill="#1c5266"/>
<text x="560.0" y="366.1" font-size="6.6" text-anchor="start" fill="#2e2e86" stroke="#2e2e86" stroke-width="0.2" textLength="11.7" lengthAdjust="spacingAndGlyphs">0.7 "</text>
<path d="M358.3 380.6L515.0 380.6" stroke="#3d7a98" stroke-width="0.8" stroke-opacity="0.62" fill="none"/>
<text x="516.7" y="382.5" font-size="6.6" text-anchor="start" fill="#2e2e86" stroke="#2e2e86" stroke-width="0.2" textLength="19.5" lengthAdjust="spacingAndGlyphs">Ø0.47 "</text>
<path d="M349.8 357.4L358.3 380.6" stroke="#3d7a98" stroke-width="0.8" stroke-opacity="0.62" fill="none"/>
<path d="M349.4 356.4L352.1 360.8L350.2 361.4Z" fill="#1c5266"/>
<path d="M412.2 357.4L420.0 380.6" stroke="#3d7a98" stroke-width="0.8" stroke-opacity="0.62" fill="none"/>
<path d="M411.8 356.4L414.3 360.8L412.4 361.5Z" fill="#1c5266"/>
<path d="M430.0 357.4L436.7 380.6" stroke="#3d7a98" stroke-width="0.8" stroke-opacity="0.62" fill="none"/>
<path d="M429.6 356.4L431.9 360.9L430.0 361.5Z" fill="#1c5266"/>
<path d="M447.6 357.4L454.2 380.6" stroke="#3d7a98" stroke-width="0.8" stroke-opacity="0.62" fill="none"/>
<path d="M447.2 356.4L449.5 360.9L447.6 361.5Z" fill="#1c5266"/>
<path d="M474.0 357.4L480.5 380.6" stroke="#3d7a98" stroke-width="0.8" stroke-opacity="0.62" fill="none"/>
<path d="M473.6 356.4L475.9 360.9L474.0 361.5Z" fill="#1c5266"/>
<path d="M500.6 357.4L507.5 380.6" stroke="#3d7a98" stroke-width="0.8" stroke-opacity="0.62" fill="none"/>
<path d="M500.2 356.4L502.6 360.9L500.7 361.5Z" fill="#1c5266"/>
<path d="M235.0 320.3L310.0 320.3" stroke="#3d7a98" stroke-width="0.8" stroke-opacity="0.62" fill="none"/>
<text x="312.5" y="321.9" font-size="6.6" text-anchor="start" fill="#2e2e86" stroke="#2e2e86" stroke-width="0.2" textLength="19.5" lengthAdjust="spacingAndGlyphs">Ø0.87 "</text>
<path d="M235.0 320.3L225.0 343.8" stroke="#3d7a98" stroke-width="0.8" stroke-opacity="0.62" fill="none"/>
<path d="M225.0 343.8L226.1 338.6L228.0 339.4Z" fill="#1c5266"/>
<path d="M270.8 320.3L260.3 343.8" stroke="#3d7a98" stroke-width="0.8" stroke-opacity="0.62" fill="none"/>
<path d="M260.3 343.8L261.5 338.6L263.3 339.5Z" fill="#1c5266"/>
<path d="M303.7 320.3L295.8 343.8" stroke="#3d7a98" stroke-width="0.8" stroke-opacity="0.62" fill="none"/>
<path d="M295.8 343.8L296.5 338.6L298.4 339.2Z" fill="#1c5266"/>
<path d="M223.0 352.0L223.0 407.5" stroke="#3d7a98" stroke-width="0.8" stroke-opacity="0.62" fill="none"/>
<path d="M258.3 352.0L258.3 407.5" stroke="#3d7a98" stroke-width="0.8" stroke-opacity="0.62" fill="none"/>
<path d="M169.9 393.5L169.9 407.5" stroke="#3d7a98" stroke-width="0.8" stroke-opacity="0.62" fill="none"/>
<path d="M347.2 352.0L347.2 407.8" stroke="#3d7a98" stroke-width="0.8" stroke-opacity="0.62" fill="none"/>
<path d="M409.6 352.0L409.6 407.8" stroke="#3d7a98" stroke-width="0.8" stroke-opacity="0.62" fill="none"/>
<path d="M169.9 401.3L190.3 401.3" stroke="#3d7a98" stroke-width="0.8" stroke-opacity="0.62" fill="none"/>
<path d="M202.3 401.3L223.0 401.3" stroke="#3d7a98" stroke-width="0.8" stroke-opacity="0.62" fill="none"/>
<path d="M169.9 401.3L176.1 400.3L176.1 402.3Z" fill="#1c5266"/>
<path d="M223.0 401.3L216.8 402.3L216.8 400.3Z" fill="#1c5266"/>
<text x="196.3" y="403.6" font-size="6.6" text-anchor="middle" fill="#2e2e86" stroke="#2e2e86" stroke-width="0.2" textLength="6.9" lengthAdjust="spacingAndGlyphs">3 "</text>
<path d="M223.0 401.3L234.5 401.3" stroke="#3d7a98" stroke-width="0.8" stroke-opacity="0.62" fill="none"/>
<path d="M245.5 401.3L258.3 401.3" stroke="#3d7a98" stroke-width="0.8" stroke-opacity="0.62" fill="none"/>
<path d="M223.0 401.3L229.2 400.3L229.2 402.3Z" fill="#1c5266"/>
<path d="M258.3 401.3L252.1 402.3L252.1 400.3Z" fill="#1c5266"/>
<text x="240.0" y="403.6" font-size="6.6" text-anchor="middle" fill="#2e2e86" stroke="#2e2e86" stroke-width="0.2" textLength="6.9" lengthAdjust="spacingAndGlyphs">2 "</text>
<path d="M347.2 401.3L370.3 401.3" stroke="#3d7a98" stroke-width="0.8" stroke-opacity="0.62" fill="none"/>
<path d="M386.3 401.3L409.6 401.3" stroke="#3d7a98" stroke-width="0.8" stroke-opacity="0.62" fill="none"/>
<path d="M347.2 401.3L353.4 400.3L353.4 402.3Z" fill="#1c5266"/>
<path d="M409.6 401.3L403.4 402.3L403.4 400.3Z" fill="#1c5266"/>
<text x="378.3" y="403.6" font-size="6.6" text-anchor="middle" fill="#2e2e86" stroke="#2e2e86" stroke-width="0.2" textLength="11.7" lengthAdjust="spacingAndGlyphs">3.5 "</text>
<path d="M154.2 391.7L167.5 391.7" stroke="#3d7a98" stroke-width="0.8" stroke-opacity="0.62" fill="none"/>
<path d="M161.2 352.0L161.2 366.8" stroke="#3d7a98" stroke-width="0.8" stroke-opacity="0.62" fill="none"/>
<path d="M161.2 375.8L161.2 391.7" stroke="#3d7a98" stroke-width="0.8" stroke-opacity="0.62" fill="none"/>
<path d="M161.2 352.0L162.2 358.2L160.2 358.2Z" fill="#1c5266"/>
<path d="M161.2 391.7L160.2 385.5L162.2 385.5Z" fill="#1c5266"/>
<text x="161.2" y="373.6" font-size="6.6" text-anchor="middle" fill="#2e2e86" stroke="#2e2e86" stroke-width="0.2" textLength="15.0" lengthAdjust="spacingAndGlyphs">2.25 "</text>
<path d="M542.5 351.7L548.7 350.7L548.7 352.7Z" fill="#4f8fb0"/>
<path d="M542.5 351.7L549.2 351.7" stroke="#4f8fb0" stroke-width="0.7" stroke-opacity="0.62" fill="none"/>
<path d="M356.2 303.0L362.4 302.0L362.4 304.0Z" fill="#4f8fb0"/>
<path d="M356.2 303.0L362.4 303.0" stroke="#4f8fb0" stroke-width="0.7" stroke-opacity="0.62" fill="none"/>
</svg>
</body></html>
